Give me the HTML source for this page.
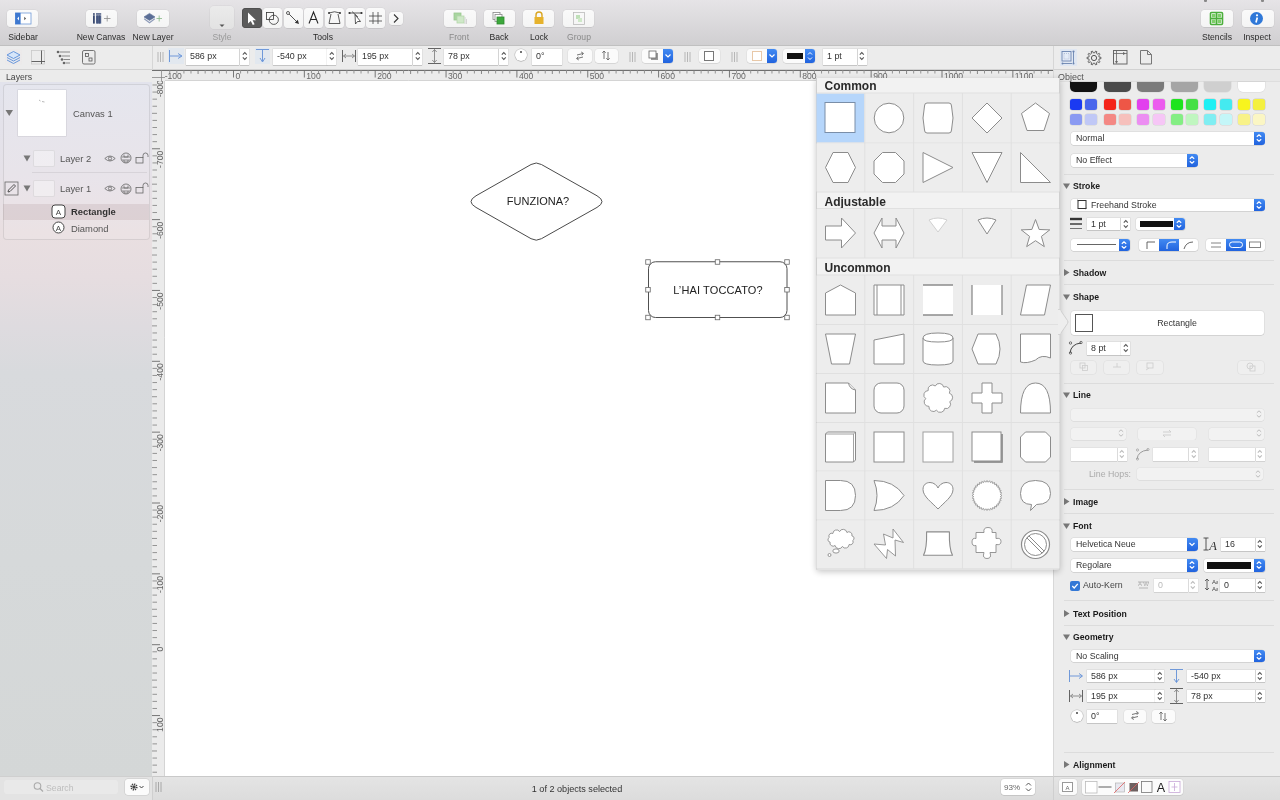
<!DOCTYPE html><html><head><meta charset="utf-8"><style>
html,body{margin:0;padding:0;}
body{width:1280px;height:800px;overflow:hidden;position:relative;font-family:"Liberation Sans", sans-serif;background:#ececec;}
div,svg{box-sizing:border-box;} div,svg{will-change:transform;}
.tb{position:absolute;background:linear-gradient(#fafafa,#f4f4f4);border-radius:3.5px;box-shadow:0 0 0 0.5px rgba(0,0,0,0.06),0 0.5px 0.5px rgba(0,0,0,0.12);}
.fld{position:absolute;background:#fff;box-shadow:0 0 0 0.5px rgba(0,0,0,0.1),0 0.5px 0.5px rgba(0,0,0,0.12);}
.btn{position:absolute;background:#fbfbfb;border-radius:3px;box-shadow:0 0 0 0.5px rgba(0,0,0,0.07),0 0.5px 0.5px rgba(0,0,0,0.12);}
.blue{position:absolute;background:linear-gradient(#428af2,#2163de);border-radius:0 3px 3px 0;}
</style></head><body>
<div style="position:absolute;left:0px;top:0px;width:1280px;height:46px;background:linear-gradient(#e6e4e7,#d0cfd1);border-bottom:1px solid #c0c0c0;"></div>
<div class="tb" style="left:7px;top:10px;width:31px;height:17px;"></div>
<svg style="position:absolute;left:14px;top:12px;" width="18" height="13" viewBox="0 0 18 13"><rect x="1.5" y="1" width="15.5" height="11" fill="#fff" stroke="#6f9ad8" stroke-width="0.8"/><rect x="1.2" y="0.8" width="5.4" height="11.4" fill="#3d78d0"/><path d="M5 4.6 L3.2 6.5 L5 8.4Z" fill="#fff"/><path d="M10.3 4.8 L12 6.5 L10.3 8.2Z" fill="#444"/></svg>
<div style="position:absolute;left:-7.5px;top:31.400000000000002px;width:60px;height:12.6px;line-height:12.6px;text-align:center;font-size:8.6px;color:#2b2b2b;font-weight:normal;white-space:nowrap;">Sidebar</div>
<div class="tb" style="left:86px;top:10px;width:31px;height:17px;"></div>
<svg style="position:absolute;left:80px;top:6px;" width="40" height="24" viewBox="0 0 40 24"><rect x="13" y="7.2" width="1.8" height="1.6" fill="#3a4a70"/><rect x="13" y="9.3" width="1.8" height="8.3" fill="#3a4a70"/><rect x="16" y="7.2" width="5.2" height="1.5" fill="#4a5a82"/><rect x="16" y="9.3" width="5.2" height="8.3" fill="#52638c"/><path d="M17.7 9.3 V17.6 M19.5 9.3 V17.6" stroke="#3a4a70" stroke-width="0.6"/><path d="M24 12.5 H30.5 M27.2 9.5 V15.5" stroke="#8a8a8a" stroke-width="0.8"/></svg>
<div style="position:absolute;left:61.0px;top:31.400000000000002px;width:80px;height:12.6px;line-height:12.6px;text-align:center;font-size:8.6px;color:#2b2b2b;font-weight:normal;white-space:nowrap;">New Canvas</div>
<div class="tb" style="left:137px;top:10px;width:32px;height:17px;"></div>
<svg style="position:absolute;left:141px;top:6px;" width="26" height="24" viewBox="0 0 26 24"><path d="M3.2 12.8 L8.5 16.8 L13.8 12.8" fill="none" stroke="#8e9bb8" stroke-width="1.2"/><path d="M8.5 7.4 L14 10.9 L8.5 14.4 L3 10.9Z" fill="#5b6e96" stroke="#5b6e96" stroke-width="0.6"/><path d="M15.5 12.5 H21 M18.2 9.5 V15.5" stroke="#86b886" stroke-width="0.8"/></svg>
<div style="position:absolute;left:113.0px;top:31.400000000000002px;width:80px;height:12.6px;line-height:12.6px;text-align:center;font-size:8.6px;color:#2b2b2b;font-weight:normal;white-space:nowrap;">New Layer</div>
<div style="position:absolute;left:210px;top:6px;width:24px;height:23px;border-radius:4px;background:linear-gradient(#ebebeb,#e2e2e2);box-shadow:0 0 0 0.5px rgba(0,0,0,0.06);"></div>
<svg style="position:absolute;left:219px;top:24px;" width="6" height="4" viewBox="0 0 6 4"><path d="M0.5 0.5 L5.5 0.5 L3 3Z" fill="#555"/></svg>
<div style="position:absolute;left:192.0px;top:31.400000000000002px;width:60px;height:12.6px;line-height:12.6px;text-align:center;font-size:8.6px;color:#9a9a9a;font-weight:normal;white-space:nowrap;">Style</div>
<div style="position:absolute;left:241.5px;top:8px;width:19.5px;height:20px;border-radius:4px;background:#5b5b5b;box-shadow:inset 0 0 0 0.5px #444;"></div>
<div class="tb" style="left:262.5px;top:8px;width:19.0px;height:20px;"></div>
<div class="tb" style="left:283.5px;top:8px;width:19.0px;height:20px;"></div>
<div class="tb" style="left:304px;top:8px;width:19px;height:20px;"></div>
<div class="tb" style="left:325px;top:8px;width:19px;height:20px;"></div>
<div class="tb" style="left:345.5px;top:8px;width:19.0px;height:20px;"></div>
<div class="tb" style="left:366px;top:8px;width:19px;height:20px;"></div>
<svg style="position:absolute;left:245px;top:11px;" width="13" height="15" viewBox="0 0 13 15"><path d="M3 1.5 L3 12.5 L5.8 10 L7.8 14 L9.6 13.2 L7.6 9.3 L11 9.2Z" fill="#fff"/></svg>
<svg style="position:absolute;left:264px;top:10px;" width="17" height="16" viewBox="0 0 17 16"><rect x="2.5" y="2.5" width="7" height="7" fill="none" stroke="#333" stroke-width="0.8"/><circle cx="9.8" cy="9.8" r="4.6" fill="none" stroke="#333" stroke-width="0.8"/></svg>
<svg style="position:absolute;left:285px;top:10px;" width="17" height="16" viewBox="0 0 17 16"><circle cx="3" cy="3" r="1.5" fill="#fff" stroke="#333" stroke-width="0.8"/><path d="M4.1 4.1 L12 12" stroke="#333" stroke-width="0.85"/><path d="M14 14 L9.8 12.8 L12.8 9.8Z" fill="#333"/></svg>
<svg style="position:absolute;left:304px;top:8px;" width="19" height="20" viewBox="0 0 19 20"><path d="M5 15.5 L9.5 4 L14 15.5 M6.6 11.5 H12.4" fill="none" stroke="#222" stroke-width="1.05"/></svg>
<svg style="position:absolute;left:326px;top:10px;" width="17" height="16" viewBox="0 0 17 16"><path d="M3 3 Q8.5 0.5 14 3" fill="none" stroke="#333" stroke-width="0.8"/><path d="M5 4 L3 13.5 L14 13.5 L12 4" fill="none" stroke="#333" stroke-width="0.8"/><circle cx="3" cy="3" r="1" fill="#333"/><circle cx="14" cy="3" r="1" fill="#333"/></svg>
<svg style="position:absolute;left:347px;top:10px;" width="17" height="16" viewBox="0 0 17 16"><path d="M2 3 L15 3" stroke="#333" stroke-width="0.8"/><path d="M8 4.5 L8.5 14 L10.5 11.5 L13.5 11.5Z" fill="#fff" stroke="#333" stroke-width="0.8"/><circle cx="2.5" cy="3" r="1.1" fill="#333"/><circle cx="14.5" cy="3" r="1.1" fill="#333"/><path d="M5 1.5 L11 7" stroke="#333" stroke-width="0.7"/></svg>
<svg style="position:absolute;left:367px;top:10px;" width="17" height="16" viewBox="0 0 17 16"><path d="M6 2 V14 M11 2 V14 M2 6 H15 M2 11 H15" stroke="#444" stroke-width="0.8"/></svg>
<div class="tb" style="left:388.5px;top:12px;width:13.5px;height:13px;"></div>
<svg style="position:absolute;left:391px;top:13px;" width="9" height="11" viewBox="0 0 9 11"><path d="M3 1.5 L7 5.5 L3 9.5" fill="none" stroke="#333" stroke-width="1.1"/></svg>
<div style="position:absolute;left:293.0px;top:31.400000000000002px;width:60px;height:12.6px;line-height:12.6px;text-align:center;font-size:8.6px;color:#2b2b2b;font-weight:normal;white-space:nowrap;">Tools</div>
<div class="tb" style="left:443.5px;top:10px;width:31.5px;height:17px;"></div>
<div style="position:absolute;left:429.25px;top:31.400000000000002px;width:60px;height:12.6px;line-height:12.6px;text-align:center;font-size:8.6px;color:#8a8a8a;font-weight:normal;white-space:nowrap;">Front</div>
<div class="tb" style="left:483.5px;top:10px;width:31.0px;height:17px;"></div>
<div style="position:absolute;left:469.0px;top:31.400000000000002px;width:60px;height:12.6px;line-height:12.6px;text-align:center;font-size:8.6px;color:#2b2b2b;font-weight:normal;white-space:nowrap;">Back</div>
<div class="tb" style="left:523px;top:10px;width:31px;height:17px;"></div>
<div style="position:absolute;left:508.5px;top:31.400000000000002px;width:60px;height:12.6px;line-height:12.6px;text-align:center;font-size:8.6px;color:#2b2b2b;font-weight:normal;white-space:nowrap;">Lock</div>
<div class="tb" style="left:563px;top:10px;width:31px;height:17px;"></div>
<div style="position:absolute;left:548.5px;top:31.400000000000002px;width:60px;height:12.6px;line-height:12.6px;text-align:center;font-size:8.6px;color:#8a8a8a;font-weight:normal;white-space:nowrap;">Group</div>
<svg style="position:absolute;left:452px;top:11px;" width="16" height="15" viewBox="0 0 16 15"><rect x="2" y="2" width="7" height="7" fill="#a8d6a0" stroke="#9bc890" stroke-width="0.8"/><rect x="5" y="5" width="7" height="7" fill="#cfe8c8" stroke="#b5d6aa" stroke-width="0.8"/><path d="M13 6 V13 M14.5 8 V13" stroke="#ccc" stroke-width="0.8"/></svg>
<svg style="position:absolute;left:491px;top:11px;" width="16" height="15" viewBox="0 0 16 15"><rect x="2" y="1.5" width="7" height="7" fill="#fff" stroke="#888" stroke-width="0.8"/><rect x="4" y="3.5" width="7" height="7" fill="#fff" stroke="#888" stroke-width="0.8"/><rect x="6" y="6" width="7" height="7" fill="#3ca83c" stroke="#2f8a2f" stroke-width="0.8"/></svg>
<svg style="position:absolute;left:532px;top:10px;" width="14" height="16" viewBox="0 0 14 16"><path d="M4 7 V5 A3 3 0 0 1 10 5 V7" fill="none" stroke="#d9a520" stroke-width="1.4"/><rect x="2.5" y="7" width="9" height="7" fill="#e6b22c"/></svg>
<svg style="position:absolute;left:571px;top:11px;" width="16" height="15" viewBox="0 0 16 15"><rect x="2.5" y="1.5" width="11" height="12" fill="none" stroke="#bbb" stroke-width="0.8"/><rect x="5" y="4" width="4" height="4" fill="#bfe0b8"/><rect x="7" y="7" width="4" height="4" fill="#cfe8c8"/></svg>
<div style="position:absolute;left:1204px;top:0px;width:2.5px;height:1.5px;background:#888;border-radius:0 0 1px 1px;"></div>
<div style="position:absolute;left:1261px;top:0px;width:2.5px;height:1.5px;background:#888;border-radius:0 0 1px 1px;"></div>
<div class="tb" style="left:1201px;top:10px;width:32px;height:17px;"></div>
<svg style="position:absolute;left:1209px;top:11px;" width="16" height="15" viewBox="0 0 16 15"><rect x="1.5" y="1.5" width="12" height="12" rx="1" fill="none" stroke="#4caf3c" stroke-width="1.6"/><path d="M7.5 1.5 V13.5 M1.5 7.5 H13.5" stroke="#4caf3c" stroke-width="1.6"/><rect x="3" y="3" width="3.5" height="3.5" fill="#7fd06a"/><rect x="8.5" y="3" width="3.5" height="3.5" fill="#7fd06a"/><rect x="3" y="8.5" width="3.5" height="3.5" fill="#7fd06a"/><rect x="8.5" y="8.5" width="3.5" height="3.5" fill="#7fd06a"/></svg>
<div style="position:absolute;left:1187.0px;top:31.400000000000002px;width:60px;height:12.6px;line-height:12.6px;text-align:center;font-size:8.6px;color:#2b2b2b;font-weight:normal;white-space:nowrap;">Stencils</div>
<div class="tb" style="left:1241.5px;top:10px;width:31.5px;height:17px;"></div>
<svg style="position:absolute;left:1249px;top:11px;" width="16" height="15" viewBox="0 0 16 15"><circle cx="7.5" cy="7.5" r="6.5" fill="#2f78d8"/><circle cx="8" cy="4.3" r="1.1" fill="#fff"/><path d="M8.3 6.5 L7 11.5" stroke="#fff" stroke-width="1.7"/></svg>
<div style="position:absolute;left:1227.0px;top:31.400000000000002px;width:60px;height:12.6px;line-height:12.6px;text-align:center;font-size:8.6px;color:#2b2b2b;font-weight:normal;white-space:nowrap;">Inspect</div>
<div style="position:absolute;left:0px;top:46px;width:1280px;height:24px;background:#ececec;border-bottom:1px solid #d2d2d2;"></div>
<svg style="position:absolute;left:5px;top:49px;background:radial-gradient(ellipse at center, rgba(200,220,250,0.5), rgba(240,225,225,0.2) 70%, transparent);" width="17" height="16" viewBox="0 0 17 16"><path d="M8.5 2.5 L15 6 L8.5 9.5 L2 6Z" fill="#d6e6fa" stroke="#5a8fd8" stroke-width="0.9"/><path d="M2 8.5 L8.5 12 L15 8.5" fill="none" stroke="#5a8fd8" stroke-width="0.9"/><path d="M2 11 L8.5 14.5 L15 11" fill="none" stroke="#5a8fd8" stroke-width="0.9"/></svg>
<svg style="position:absolute;left:31px;top:50px;" width="15" height="15" viewBox="0 0 15 15"><rect x="0.5" y="0.5" width="13" height="13.5" fill="none" stroke="#c8c8c8" stroke-width="0.8"/><path d="M0.5 11.5 H14 M10.5 0.5 V14" stroke="#555" stroke-width="0.9"/></svg>
<svg style="position:absolute;left:56px;top:50px;" width="15" height="15" viewBox="0 0 15 15"><circle cx="2" cy="2" r="1.3" fill="#666"/><circle cx="4" cy="6" r="1.3" fill="#666"/><circle cx="6" cy="9.5" r="1.3" fill="#666"/><circle cx="8" cy="13" r="1.3" fill="#666"/><path d="M3.5 2 H14 M5.5 6 H14 M7.5 9.5 H14 M9.5 13 H14" stroke="#888" stroke-width="1"/></svg>
<svg style="position:absolute;left:81.5px;top:50px;" width="14" height="15" viewBox="0 0 14 15"><rect x="0.5" y="0.5" width="12.5" height="13.5" rx="1.5" fill="none" stroke="#666" stroke-width="0.9"/><rect x="3.5" y="3.5" width="3" height="3" fill="none" stroke="#555" stroke-width="0.8"/><rect x="7" y="8" width="3" height="3" fill="none" stroke="#555" stroke-width="0.8"/></svg>
<div style="position:absolute;left:152px;top:46px;width:1px;height:24px;background:#d6d6d6;"></div>
<svg style="position:absolute;left:156.5px;top:51px;" width="7" height="12" viewBox="0 0 7 12"><path d="M1 1 V11 M3.5 1 V11 M6 1 V11" stroke="#aaa" stroke-width="0.8"/></svg>
<svg style="position:absolute;left:168px;top:48px;background:rgba(210,225,245,0.35);" width="16" height="16" viewBox="0 0 16 16"><path d="M1.5 2 V14" stroke="#5a8ad6" stroke-width="0.85"/><path d="M2 8 H13" stroke="#5a8ad6" stroke-width="0.85"/><path d="M10 5.5 L14 8 L10 10.5" fill="none" stroke="#5a8ad6" stroke-width="0.85"/></svg>
<div class="fld" style="left:186px;top:48.5px;width:53.0px;height:15.5px;"></div><div style="position:absolute;left:190px;top:50.3px;height:12.9px;line-height:12.9px;font-size:8.9px;color:#333;font-weight:normal;white-space:nowrap;">586 px</div><div class="fld" style="left:240.0px;top:48.5px;width:8.5px;height:15.5px;"></div><svg style="position:absolute;left:240.5px;top:51.25px;" width="8" height="10" viewBox="0 0 8 10"><path d="M1.8 3.6 L3.8 1.6 L5.8 3.6 M1.8 6.4 L3.8 8.4 L5.8 6.4" fill="none" stroke="#555" stroke-width="1.05"/></svg>
<svg style="position:absolute;left:255px;top:48px;background:rgba(210,225,245,0.35);" width="15" height="16" viewBox="0 0 15 16"><path d="M1 1.5 H14" stroke="#5a8ad6" stroke-width="0.85"/><path d="M7.5 2 V13" stroke="#5a8ad6" stroke-width="0.85"/><path d="M5 10 L7.5 14 L10 10" fill="none" stroke="#5a8ad6" stroke-width="0.85"/></svg>
<div class="fld" style="left:272.5px;top:48.5px;width:53.5px;height:15.5px;"></div><div style="position:absolute;left:276.5px;top:50.3px;height:12.9px;line-height:12.9px;font-size:8.9px;color:#333;font-weight:normal;white-space:nowrap;">-540 px</div><div class="fld" style="left:327.0px;top:48.5px;width:8.5px;height:15.5px;"></div><svg style="position:absolute;left:327.5px;top:51.25px;" width="8" height="10" viewBox="0 0 8 10"><path d="M1.8 3.6 L3.8 1.6 L5.8 3.6 M1.8 6.4 L3.8 8.4 L5.8 6.4" fill="none" stroke="#555" stroke-width="1.05"/></svg>
<svg style="position:absolute;left:341px;top:48px;" width="16" height="16" viewBox="0 0 16 16"><path d="M1.5 2 V14 M14.5 2 V14" stroke="#555" stroke-width="0.9"/><path d="M2.5 8 H13.5" stroke="#777" stroke-width="0.8"/><path d="M5 6 L2.5 8 L5 10 M11 6 L13.5 8 L11 10" fill="none" stroke="#777" stroke-width="0.8"/></svg>
<div class="fld" style="left:358px;top:48.5px;width:54.0px;height:15.5px;"></div><div style="position:absolute;left:362px;top:50.3px;height:12.9px;line-height:12.9px;font-size:8.9px;color:#333;font-weight:normal;white-space:nowrap;">195 px</div><div class="fld" style="left:413.0px;top:48.5px;width:8.5px;height:15.5px;"></div><svg style="position:absolute;left:413.5px;top:51.25px;" width="8" height="10" viewBox="0 0 8 10"><path d="M1.8 3.6 L3.8 1.6 L5.8 3.6 M1.8 6.4 L3.8 8.4 L5.8 6.4" fill="none" stroke="#555" stroke-width="1.05"/></svg>
<svg style="position:absolute;left:427px;top:47px;" width="15" height="18" viewBox="0 0 15 18"><path d="M1 1.5 H14 M1 16.5 H14" stroke="#555" stroke-width="0.9"/><path d="M7.5 2.5 V15.5" stroke="#777" stroke-width="0.8"/><path d="M5.3 5 L7.5 2.5 L9.7 5 M5.3 13 L7.5 15.5 L9.7 13" fill="none" stroke="#777" stroke-width="0.8"/></svg>
<div class="fld" style="left:444px;top:48.5px;width:54.0px;height:15.5px;"></div><div style="position:absolute;left:448px;top:50.3px;height:12.9px;line-height:12.9px;font-size:8.9px;color:#333;font-weight:normal;white-space:nowrap;">78 px</div><div class="fld" style="left:499.0px;top:48.5px;width:8.5px;height:15.5px;"></div><svg style="position:absolute;left:499.5px;top:51.25px;" width="8" height="10" viewBox="0 0 8 10"><path d="M1.8 3.6 L3.8 1.6 L5.8 3.6 M1.8 6.4 L3.8 8.4 L5.8 6.4" fill="none" stroke="#555" stroke-width="1.05"/></svg>
<div style="position:absolute;left:514.5px;top:49px;width:12px;height:12px;border-radius:50%;background:#fff;box-shadow:0 0 0 0.5px rgba(0,0,0,0.2),0 0.5px 1px rgba(0,0,0,0.2);"></div>
<div style="position:absolute;left:519.5px;top:51px;width:2px;height:2px;background:#444;border-radius:1px;"></div>
<div class="fld" style="left:531.5px;top:48.5px;width:29.5px;height:15.5px;"></div><div style="position:absolute;left:535.5px;top:50.3px;height:12.9px;line-height:12.9px;font-size:8.9px;color:#333;font-weight:normal;white-space:nowrap;">0°</div>
<div class="btn" style="left:567.5px;top:49px;width:24px;height:13.5px;"></div>
<svg style="position:absolute;left:573px;top:49px;" width="14" height="14" viewBox="0 0 14 14"><path d="M4 6 L10 4.5 M8.2 3 L10.5 4.4 L8.8 6.3 M10 8 L4 9.5 M5.8 11 L3.5 9.6 L5.2 7.7" fill="none" stroke="#666" stroke-width="0.9"/></svg>
<div class="btn" style="left:595px;top:49px;width:22.5px;height:13.5px;"></div>
<svg style="position:absolute;left:599px;top:48px;" width="14" height="15" viewBox="0 0 14 15"><path d="M5 11 V3 M3.3 4.8 L5 3 L6.7 4.8 M9 4 V12 M7.3 10.2 L9 12 L10.7 10.2" fill="none" stroke="#666" stroke-width="0.9"/></svg>
<svg style="position:absolute;left:629px;top:51px;" width="7" height="12" viewBox="0 0 7 12"><path d="M1 1 V11 M3.5 1 V11 M6 1 V11" stroke="#aaa" stroke-width="0.8"/></svg>
<div class="btn" style="left:642px;top:49px;width:31px;height:14px;border-radius:3px;"></div>
<svg style="position:absolute;left:647px;top:49px;" width="14" height="14" viewBox="0 0 14 14"><rect x="4" y="4" width="7" height="7" fill="#999"/><rect x="2" y="2" width="7" height="7" fill="#fff" stroke="#666" stroke-width="0.8"/></svg>
<div class="blue" style="left:663px;top:49px;width:10px;height:14px;"></div>
<svg style="position:absolute;left:663px;top:49px;" width="10" height="14" viewBox="0 0 10 14"><path d="M2.5 5.5 L5 8 L7.5 5.5" fill="none" stroke="#fff" stroke-width="1.2"/></svg>
<svg style="position:absolute;left:684px;top:51px;" width="7" height="12" viewBox="0 0 7 12"><path d="M1 1 V11 M3.5 1 V11 M6 1 V11" stroke="#aaa" stroke-width="0.8"/></svg>
<div class="btn" style="left:699px;top:49px;width:20.5px;height:14px;"></div>
<div style="position:absolute;left:704px;top:51px;width:10px;height:10px;border:1px solid #777;background:#fff;"></div>
<svg style="position:absolute;left:731px;top:51px;" width="7" height="12" viewBox="0 0 7 12"><path d="M1 1 V11 M3.5 1 V11 M6 1 V11" stroke="#aaa" stroke-width="0.8"/></svg>
<div class="btn" style="left:746.5px;top:49px;width:29.5px;height:14px;"></div>
<div style="position:absolute;left:752px;top:51px;width:10px;height:10px;border:1px solid #e8c8a8;background:#fff;"></div>
<div class="blue" style="left:766.5px;top:49px;width:9.5px;height:14px;"></div>
<svg style="position:absolute;left:766.5px;top:49px;" width="10" height="14" viewBox="0 0 10 14"><path d="M2.5 5.5 L5 8 L7.5 5.5" fill="none" stroke="#fff" stroke-width="1.2"/></svg>
<div class="btn" style="left:783px;top:49px;width:32px;height:14px;"></div>
<div style="position:absolute;left:787px;top:52.5px;width:16px;height:6px;background:#111;"></div>
<div class="blue" style="left:805px;top:49px;width:10px;height:14px;"></div>
<svg style="position:absolute;left:805px;top:49px;" width="10" height="14" viewBox="0 0 10 14"><path d="M3 5.5 L5 3.5 L7 5.5 M3 8.5 L5 10.5 L7 8.5" fill="none" stroke="#fff" stroke-width="1"/></svg>
<div class="fld" style="left:822.5px;top:48.5px;width:34.0px;height:15.5px;"></div><div style="position:absolute;left:826.5px;top:50.3px;height:12.9px;line-height:12.9px;font-size:8.9px;color:#333;font-weight:normal;white-space:nowrap;">1 pt</div><div class="fld" style="left:857.5px;top:48.5px;width:8.5px;height:15.5px;"></div><svg style="position:absolute;left:858.0px;top:51.25px;" width="8" height="10" viewBox="0 0 8 10"><path d="M1.8 3.6 L3.8 1.6 L5.8 3.6 M1.8 6.4 L3.8 8.4 L5.8 6.4" fill="none" stroke="#555" stroke-width="1.05"/></svg>
<div style="position:absolute;left:1053px;top:46px;width:1px;height:24px;background:#d6d6d6;"></div>
<svg style="position:absolute;left:1060px;top:49px;background:rgba(215,228,248,0.55);" width="17" height="17" viewBox="0 0 17 17"><rect x="2" y="2.5" width="9" height="9.5" fill="#e4ecf8" stroke="#6b84b0" stroke-width="0.9"/><rect x="4" y="4.5" width="5" height="5.5" fill="none" stroke="#9aaac8" stroke-width="0.6" stroke-dasharray="1 1"/><path d="M13.5 2.5 V14.5 M2 14.5 H12" stroke="#6b84b0" stroke-width="0.9"/><circle cx="13.5" cy="2.5" r="1.1" fill="#6b84b0"/><circle cx="13.5" cy="14.5" r="1" fill="#6b84b0"/><circle cx="2.5" cy="14.5" r="1" fill="#6b84b0"/></svg>
<svg style="position:absolute;left:1086px;top:49.5px;" width="16" height="16" viewBox="0 0 16 16"><path d="M13.23 7.15 L14.96 7.30 L14.96 8.70 L13.23 8.85 L12.73 10.39 L14.05 11.53 L13.22 12.66 L11.73 11.76 L10.42 12.71 L10.82 14.41 L9.48 14.84 L8.81 13.24 L7.19 13.24 L6.52 14.84 L5.18 14.41 L5.58 12.71 L4.27 11.76 L2.78 12.66 L1.95 11.53 L3.27 10.39 L2.77 8.85 L1.04 8.70 L1.04 7.30 L2.77 7.15 L3.27 5.61 L1.95 4.47 L2.78 3.34 L4.27 4.24 L5.58 3.29 L5.18 1.59 L6.52 1.16 L7.19 2.76 L8.81 2.76 L9.48 1.16 L10.82 1.59 L10.42 3.29 L11.73 4.24 L13.22 3.34 L14.05 4.47 L12.73 5.61Z" fill="none" stroke="#555" stroke-width="0.9" stroke-linejoin="round"/><circle cx="8" cy="8" r="2.6" fill="none" stroke="#555" stroke-width="1"/></svg>
<svg style="position:absolute;left:1112px;top:50px;" width="16" height="15" viewBox="0 0 16 15"><rect x="1.5" y="0.5" width="13.5" height="13.5" fill="none" stroke="#666" stroke-width="1"/><path d="M4.5 1 V13.5 M1.5 3.5 H15" stroke="#666" stroke-width="0.8"/><path d="M11 2.3 L13 3.5 L11 4.7 M3.3 11 L4.5 13 L5.7 11" fill="#666" stroke="#666" stroke-width="0.6"/></svg>
<svg style="position:absolute;left:1139px;top:50px;" width="14" height="15" viewBox="0 0 14 15"><path d="M1.5 0.5 H8.5 L12.5 4.5 V14 H1.5Z M8.5 0.5 V4.5 H12.5" fill="none" stroke="#777" stroke-width="1"/></svg>
<div style="position:absolute;left:0px;top:70px;width:152px;height:12px;background:#ebebeb;"></div>
<div style="position:absolute;left:6px;top:70.65px;height:12.7px;line-height:12.7px;font-size:8.7px;color:#444;font-weight:normal;white-space:nowrap;">Layers</div>
<div style="position:absolute;left:0px;top:82px;width:152px;height:694px;background:linear-gradient(180deg,#e2e3ec 0px,#e5e1e8 90px,#e9dfe1 150px,#e6dde0 195px,#dedbdf 245px,#d8dadd 290px,#d6d9da 480px,#d4d7d7 694px);"></div>
<div style="position:absolute;left:2.5px;top:83.5px;width:147px;height:156px;border:1px solid rgba(0,0,0,0.09);border-radius:4px;background:rgba(255,255,255,0.12);"></div>
<svg style="position:absolute;left:5px;top:108.5px;" width="9" height="8" viewBox="0 0 9 8"><path d="M0.5 1 L8 1 L4.25 7Z" fill="#777"/></svg>
<div style="position:absolute;left:17.7px;top:89.5px;width:48.3px;height:46.3px;background:#fff;box-shadow:0 0 0 0.5px rgba(0,0,0,0.12);"></div>
<svg style="position:absolute;left:38px;top:99px;" width="8" height="5" viewBox="0 0 8 5"><path d="M1 1 L2.5 2 M4 2.5 L6.5 3" stroke="#999" stroke-width="0.7"/></svg>
<div style="position:absolute;left:72.5px;top:106.8px;height:13.4px;line-height:13.4px;font-size:9.4px;color:#555;font-weight:normal;white-space:nowrap;">Canvas 1</div>
<svg style="position:absolute;left:22.5px;top:154.5px;" width="8" height="7" viewBox="0 0 8 7"><path d="M0.5 0.5 L7.5 0.5 L4 6.5Z" fill="#777"/></svg>
<div style="position:absolute;left:32.5px;top:149.5px;width:22px;height:17px;background:rgba(255,255,255,0.35);border:1px solid rgba(0,0,0,0.08);border-radius:2px;"></div>
<div style="position:absolute;left:60px;top:151.8px;height:13.4px;line-height:13.4px;font-size:9.4px;color:#555;font-weight:normal;white-space:nowrap;">Layer 2</div>
<svg style="position:absolute;left:104px;top:153.5px;" width="12" height="9" viewBox="0 0 12 9"><path d="M0.8 4.5 Q6 -0.5 11.2 4.5 Q6 9.5 0.8 4.5Z" fill="none" stroke="#666" stroke-width="0.8"/><circle cx="6" cy="4.5" r="1.6" fill="none" stroke="#666" stroke-width="0.8"/></svg>
<svg style="position:absolute;left:119.5px;top:152px;" width="12" height="12" viewBox="0 0 12 12"><circle cx="6" cy="6" r="5" fill="none" stroke="#666" stroke-width="0.8"/><path d="M2 5 H10 M2 8 H10 M4 2.5 V5 H8 V2.5 M4 8 V10 H8 V8" fill="none" stroke="#666" stroke-width="0.7"/></svg>
<svg style="position:absolute;left:134.5px;top:151.5px;" width="14" height="12" viewBox="0 0 14 12"><rect x="1" y="5.5" width="7" height="5.5" fill="none" stroke="#666" stroke-width="0.8"/><path d="M8 5.5 V3.5 A2.5 2.5 0 0 1 13 3.5 V5" fill="none" stroke="#666" stroke-width="0.8"/></svg>
<div style="position:absolute;left:32px;top:172px;width:115px;height:1px;background:rgba(0,0,0,0.07);"></div>
<svg style="position:absolute;left:3.5px;top:180.5px;" width="15" height="15" viewBox="0 0 15 15"><rect x="1" y="1" width="13" height="13" fill="none" stroke="#666" stroke-width="0.8"/><path d="M4 11 L4.5 9 L10 3.5 L11.5 5 L6 10.5Z" fill="none" stroke="#444" stroke-width="0.9"/></svg>
<svg style="position:absolute;left:22.5px;top:184.5px;" width="8" height="7" viewBox="0 0 8 7"><path d="M0.5 0.5 L7.5 0.5 L4 6.5Z" fill="#777"/></svg>
<div style="position:absolute;left:32.5px;top:180px;width:22px;height:17px;background:rgba(255,255,255,0.35);border:1px solid rgba(0,0,0,0.08);border-radius:2px;"></div>
<div style="position:absolute;left:60px;top:182.3px;height:13.4px;line-height:13.4px;font-size:9.4px;color:#555;font-weight:normal;white-space:nowrap;">Layer 1</div>
<svg style="position:absolute;left:104px;top:184px;" width="12" height="9" viewBox="0 0 12 9"><path d="M0.8 4.5 Q6 -0.5 11.2 4.5 Q6 9.5 0.8 4.5Z" fill="none" stroke="#666" stroke-width="0.8"/><circle cx="6" cy="4.5" r="1.6" fill="none" stroke="#666" stroke-width="0.8"/></svg>
<svg style="position:absolute;left:119.5px;top:182.5px;" width="12" height="12" viewBox="0 0 12 12"><circle cx="6" cy="6" r="5" fill="none" stroke="#666" stroke-width="0.8"/><path d="M2 5 H10 M2 8 H10 M4 2.5 V5 H8 V2.5 M4 8 V10 H8 V8" fill="none" stroke="#666" stroke-width="0.7"/></svg>
<svg style="position:absolute;left:134.5px;top:182px;" width="14" height="12" viewBox="0 0 14 12"><rect x="1" y="5.5" width="7" height="5.5" fill="none" stroke="#666" stroke-width="0.8"/><path d="M8 5.5 V3.5 A2.5 2.5 0 0 1 13 3.5 V5" fill="none" stroke="#666" stroke-width="0.8"/></svg>
<div style="position:absolute;left:3px;top:203.5px;width:146px;height:16px;background:rgba(150,120,120,0.16);"></div>
<svg style="position:absolute;left:50.5px;top:204px;" width="15" height="15" viewBox="0 0 15 15"><rect x="1" y="1" width="13" height="13" rx="3" fill="#fff" stroke="#444" stroke-width="1"/><text x="7.5" y="11" font-size="8" text-anchor="middle" fill="#444" font-family="Liberation Sans">A</text></svg>
<div style="position:absolute;left:71px;top:205.3px;height:13.4px;line-height:13.4px;font-size:9.4px;color:#333;font-weight:bold;white-space:nowrap;">Rectangle</div>
<svg style="position:absolute;left:52px;top:221px;" width="13" height="13" viewBox="0 0 13 13"><circle cx="6.5" cy="6.5" r="5.5" fill="#fff" stroke="#444" stroke-width="1"/><text x="6.5" y="10" font-size="8" text-anchor="middle" fill="#444" font-family="Liberation Sans">A</text></svg>
<div style="position:absolute;left:71px;top:221.8px;height:13.4px;line-height:13.4px;font-size:9.4px;color:#555;font-weight:normal;white-space:nowrap;">Diamond</div>
<div style="position:absolute;left:0px;top:776px;width:152px;height:24px;background:#e3e3e3;border-top:1px solid #cfcfcf;"></div>
<div style="position:absolute;left:4px;top:780px;width:114px;height:14px;background:#e9e9e9;border-radius:3px;"></div>
<svg style="position:absolute;left:33px;top:781px;" width="11" height="12" viewBox="0 0 11 12"><circle cx="4.5" cy="5" r="3.3" fill="none" stroke="#aaa" stroke-width="1.1"/><path d="M7 7.5 L10 10.5" stroke="#aaa" stroke-width="1.3"/></svg>
<div style="position:absolute;left:46px;top:781.65px;height:12.7px;line-height:12.7px;font-size:8.7px;color:#bdbdbd;font-weight:normal;white-space:nowrap;">Search</div>
<div style="position:absolute;left:125px;top:779px;width:24px;height:16px;background:#fbfbfb;border-radius:3px;box-shadow:0 0 0 0.5px rgba(0,0,0,0.12);"></div>
<svg style="position:absolute;left:129px;top:781px;" width="18" height="12" viewBox="0 0 18 12"><circle cx="5" cy="6" r="2.6" fill="none" stroke="#444" stroke-width="2" stroke-dasharray="1.2 0.8"/><circle cx="5" cy="6" r="1.5" fill="#444"/><path d="M10.5 5 L12.5 7 L14.5 5" fill="none" stroke="#444" stroke-width="1"/></svg>
<div style="position:absolute;left:152px;top:776px;width:1px;height:24px;background:#cfcfcf;"></div>
<svg style="position:absolute;left:155px;top:781px;" width="7" height="12" viewBox="0 0 7 12"><path d="M1 1 V11 M3.5 1 V11 M6 1 V11" stroke="#999" stroke-width="0.8"/></svg>
<div style="position:absolute;left:165px;top:81px;width:888px;height:695px;background:#fff;"></div>
<svg style="position:absolute;left:152px;top:70px;" width="901" height="11" viewBox="0 0 901 11"><rect x="0" y="0" width="901" height="11" fill="#ebebeb"/><path d="M0 0.5 H901" stroke="#6f6f6f" stroke-width="1"/><path d="M0 10.5 H901" stroke="#d4d4d4" stroke-width="1"/><path d="M17.74 0 V3.5" stroke="#8a8a8a" stroke-width="0.9"/><path d="M24.82 0 V3.5" stroke="#8a8a8a" stroke-width="0.9"/><path d="M31.91 0 V3.5" stroke="#8a8a8a" stroke-width="0.9"/><path d="M38.99 0 V3.5" stroke="#8a8a8a" stroke-width="0.9"/><path d="M46.07 0 V4" stroke="#7a7a7a" stroke-width="0.9"/><path d="M53.16 0 V3.5" stroke="#8a8a8a" stroke-width="0.9"/><path d="M60.25 0 V3.5" stroke="#8a8a8a" stroke-width="0.9"/><path d="M67.33 0 V3.5" stroke="#8a8a8a" stroke-width="0.9"/><path d="M74.41 0 V3.5" stroke="#8a8a8a" stroke-width="0.9"/><path d="M81.50 0 V7.5" stroke="#6a6a6a" stroke-width="0.9"/><path d="M88.59 0 V3.5" stroke="#8a8a8a" stroke-width="0.9"/><path d="M95.67 0 V3.5" stroke="#8a8a8a" stroke-width="0.9"/><path d="M102.75 0 V3.5" stroke="#8a8a8a" stroke-width="0.9"/><path d="M109.84 0 V3.5" stroke="#8a8a8a" stroke-width="0.9"/><path d="M116.93 0 V4" stroke="#7a7a7a" stroke-width="0.9"/><path d="M124.01 0 V3.5" stroke="#8a8a8a" stroke-width="0.9"/><path d="M131.09 0 V3.5" stroke="#8a8a8a" stroke-width="0.9"/><path d="M138.18 0 V3.5" stroke="#8a8a8a" stroke-width="0.9"/><path d="M145.26 0 V3.5" stroke="#8a8a8a" stroke-width="0.9"/><path d="M152.35 0 V7.5" stroke="#6a6a6a" stroke-width="0.9"/><path d="M159.44 0 V3.5" stroke="#8a8a8a" stroke-width="0.9"/><path d="M166.52 0 V3.5" stroke="#8a8a8a" stroke-width="0.9"/><path d="M173.61 0 V3.5" stroke="#8a8a8a" stroke-width="0.9"/><path d="M180.69 0 V3.5" stroke="#8a8a8a" stroke-width="0.9"/><path d="M187.77 0 V4" stroke="#7a7a7a" stroke-width="0.9"/><path d="M194.86 0 V3.5" stroke="#8a8a8a" stroke-width="0.9"/><path d="M201.94 0 V3.5" stroke="#8a8a8a" stroke-width="0.9"/><path d="M209.03 0 V3.5" stroke="#8a8a8a" stroke-width="0.9"/><path d="M216.12 0 V3.5" stroke="#8a8a8a" stroke-width="0.9"/><path d="M223.20 0 V7.5" stroke="#6a6a6a" stroke-width="0.9"/><path d="M230.28 0 V3.5" stroke="#8a8a8a" stroke-width="0.9"/><path d="M237.37 0 V3.5" stroke="#8a8a8a" stroke-width="0.9"/><path d="M244.45 0 V3.5" stroke="#8a8a8a" stroke-width="0.9"/><path d="M251.54 0 V3.5" stroke="#8a8a8a" stroke-width="0.9"/><path d="M258.62 0 V4" stroke="#7a7a7a" stroke-width="0.9"/><path d="M265.71 0 V3.5" stroke="#8a8a8a" stroke-width="0.9"/><path d="M272.79 0 V3.5" stroke="#8a8a8a" stroke-width="0.9"/><path d="M279.88 0 V3.5" stroke="#8a8a8a" stroke-width="0.9"/><path d="M286.96 0 V3.5" stroke="#8a8a8a" stroke-width="0.9"/><path d="M294.05 0 V7.5" stroke="#6a6a6a" stroke-width="0.9"/><path d="M301.13 0 V3.5" stroke="#8a8a8a" stroke-width="0.9"/><path d="M308.22 0 V3.5" stroke="#8a8a8a" stroke-width="0.9"/><path d="M315.30 0 V3.5" stroke="#8a8a8a" stroke-width="0.9"/><path d="M322.39 0 V3.5" stroke="#8a8a8a" stroke-width="0.9"/><path d="M329.48 0 V4" stroke="#7a7a7a" stroke-width="0.9"/><path d="M336.56 0 V3.5" stroke="#8a8a8a" stroke-width="0.9"/><path d="M343.64 0 V3.5" stroke="#8a8a8a" stroke-width="0.9"/><path d="M350.73 0 V3.5" stroke="#8a8a8a" stroke-width="0.9"/><path d="M357.81 0 V3.5" stroke="#8a8a8a" stroke-width="0.9"/><path d="M364.90 0 V7.5" stroke="#6a6a6a" stroke-width="0.9"/><path d="M371.99 0 V3.5" stroke="#8a8a8a" stroke-width="0.9"/><path d="M379.07 0 V3.5" stroke="#8a8a8a" stroke-width="0.9"/><path d="M386.15 0 V3.5" stroke="#8a8a8a" stroke-width="0.9"/><path d="M393.24 0 V3.5" stroke="#8a8a8a" stroke-width="0.9"/><path d="M400.32 0 V4" stroke="#7a7a7a" stroke-width="0.9"/><path d="M407.41 0 V3.5" stroke="#8a8a8a" stroke-width="0.9"/><path d="M414.50 0 V3.5" stroke="#8a8a8a" stroke-width="0.9"/><path d="M421.58 0 V3.5" stroke="#8a8a8a" stroke-width="0.9"/><path d="M428.66 0 V3.5" stroke="#8a8a8a" stroke-width="0.9"/><path d="M435.75 0 V7.5" stroke="#6a6a6a" stroke-width="0.9"/><path d="M442.84 0 V3.5" stroke="#8a8a8a" stroke-width="0.9"/><path d="M449.92 0 V3.5" stroke="#8a8a8a" stroke-width="0.9"/><path d="M457.00 0 V3.5" stroke="#8a8a8a" stroke-width="0.9"/><path d="M464.09 0 V3.5" stroke="#8a8a8a" stroke-width="0.9"/><path d="M471.17 0 V4" stroke="#7a7a7a" stroke-width="0.9"/><path d="M478.26 0 V3.5" stroke="#8a8a8a" stroke-width="0.9"/><path d="M485.35 0 V3.5" stroke="#8a8a8a" stroke-width="0.9"/><path d="M492.43 0 V3.5" stroke="#8a8a8a" stroke-width="0.9"/><path d="M499.51 0 V3.5" stroke="#8a8a8a" stroke-width="0.9"/><path d="M506.60 0 V7.5" stroke="#6a6a6a" stroke-width="0.9"/><path d="M513.68 0 V3.5" stroke="#8a8a8a" stroke-width="0.9"/><path d="M520.77 0 V3.5" stroke="#8a8a8a" stroke-width="0.9"/><path d="M527.85 0 V3.5" stroke="#8a8a8a" stroke-width="0.9"/><path d="M534.94 0 V3.5" stroke="#8a8a8a" stroke-width="0.9"/><path d="M542.02 0 V4" stroke="#7a7a7a" stroke-width="0.9"/><path d="M549.11 0 V3.5" stroke="#8a8a8a" stroke-width="0.9"/><path d="M556.19 0 V3.5" stroke="#8a8a8a" stroke-width="0.9"/><path d="M563.28 0 V3.5" stroke="#8a8a8a" stroke-width="0.9"/><path d="M570.37 0 V3.5" stroke="#8a8a8a" stroke-width="0.9"/><path d="M577.45 0 V7.5" stroke="#6a6a6a" stroke-width="0.9"/><path d="M584.53 0 V3.5" stroke="#8a8a8a" stroke-width="0.9"/><path d="M591.62 0 V3.5" stroke="#8a8a8a" stroke-width="0.9"/><path d="M598.70 0 V3.5" stroke="#8a8a8a" stroke-width="0.9"/><path d="M605.79 0 V3.5" stroke="#8a8a8a" stroke-width="0.9"/><path d="M612.88 0 V4" stroke="#7a7a7a" stroke-width="0.9"/><path d="M619.96 0 V3.5" stroke="#8a8a8a" stroke-width="0.9"/><path d="M627.04 0 V3.5" stroke="#8a8a8a" stroke-width="0.9"/><path d="M634.13 0 V3.5" stroke="#8a8a8a" stroke-width="0.9"/><path d="M641.21 0 V3.5" stroke="#8a8a8a" stroke-width="0.9"/><path d="M648.30 0 V7.5" stroke="#6a6a6a" stroke-width="0.9"/><path d="M655.38 0 V3.5" stroke="#8a8a8a" stroke-width="0.9"/><path d="M662.47 0 V3.5" stroke="#8a8a8a" stroke-width="0.9"/><path d="M669.55 0 V3.5" stroke="#8a8a8a" stroke-width="0.9"/><path d="M676.64 0 V3.5" stroke="#8a8a8a" stroke-width="0.9"/><path d="M683.72 0 V4" stroke="#7a7a7a" stroke-width="0.9"/><path d="M690.81 0 V3.5" stroke="#8a8a8a" stroke-width="0.9"/><path d="M697.89 0 V3.5" stroke="#8a8a8a" stroke-width="0.9"/><path d="M704.98 0 V3.5" stroke="#8a8a8a" stroke-width="0.9"/><path d="M712.06 0 V3.5" stroke="#8a8a8a" stroke-width="0.9"/><path d="M719.15 0 V7.5" stroke="#6a6a6a" stroke-width="0.9"/><path d="M726.23 0 V3.5" stroke="#8a8a8a" stroke-width="0.9"/><path d="M733.32 0 V3.5" stroke="#8a8a8a" stroke-width="0.9"/><path d="M740.40 0 V3.5" stroke="#8a8a8a" stroke-width="0.9"/><path d="M747.49 0 V3.5" stroke="#8a8a8a" stroke-width="0.9"/><path d="M754.57 0 V4" stroke="#7a7a7a" stroke-width="0.9"/><path d="M761.66 0 V3.5" stroke="#8a8a8a" stroke-width="0.9"/><path d="M768.75 0 V3.5" stroke="#8a8a8a" stroke-width="0.9"/><path d="M775.83 0 V3.5" stroke="#8a8a8a" stroke-width="0.9"/><path d="M782.91 0 V3.5" stroke="#8a8a8a" stroke-width="0.9"/><path d="M790.00 0 V7.5" stroke="#6a6a6a" stroke-width="0.9"/><path d="M797.08 0 V3.5" stroke="#8a8a8a" stroke-width="0.9"/><path d="M804.17 0 V3.5" stroke="#8a8a8a" stroke-width="0.9"/><path d="M811.25 0 V3.5" stroke="#8a8a8a" stroke-width="0.9"/><path d="M818.34 0 V3.5" stroke="#8a8a8a" stroke-width="0.9"/><path d="M825.42 0 V4" stroke="#7a7a7a" stroke-width="0.9"/><path d="M832.51 0 V3.5" stroke="#8a8a8a" stroke-width="0.9"/><path d="M839.60 0 V3.5" stroke="#8a8a8a" stroke-width="0.9"/><path d="M846.68 0 V3.5" stroke="#8a8a8a" stroke-width="0.9"/><path d="M853.76 0 V3.5" stroke="#8a8a8a" stroke-width="0.9"/><path d="M860.85 0 V7.5" stroke="#6a6a6a" stroke-width="0.9"/><path d="M867.93 0 V3.5" stroke="#8a8a8a" stroke-width="0.9"/><path d="M875.02 0 V3.5" stroke="#8a8a8a" stroke-width="0.9"/><path d="M882.11 0 V3.5" stroke="#8a8a8a" stroke-width="0.9"/><path d="M889.19 0 V3.5" stroke="#8a8a8a" stroke-width="0.9"/><path d="M896.27 0 V4" stroke="#7a7a7a" stroke-width="0.9"/><text x="12.65" y="9.3" font-size="8.6" fill="#666" font-family="Liberation Sans">-100</text><text x="83.50" y="9.3" font-size="8.6" fill="#666" font-family="Liberation Sans">0</text><text x="154.35" y="9.3" font-size="8.6" fill="#666" font-family="Liberation Sans">100</text><text x="225.20" y="9.3" font-size="8.6" fill="#666" font-family="Liberation Sans">200</text><text x="296.05" y="9.3" font-size="8.6" fill="#666" font-family="Liberation Sans">300</text><text x="366.90" y="9.3" font-size="8.6" fill="#666" font-family="Liberation Sans">400</text><text x="437.75" y="9.3" font-size="8.6" fill="#666" font-family="Liberation Sans">500</text><text x="508.60" y="9.3" font-size="8.6" fill="#666" font-family="Liberation Sans">600</text><text x="579.45" y="9.3" font-size="8.6" fill="#666" font-family="Liberation Sans">700</text><text x="650.30" y="9.3" font-size="8.6" fill="#666" font-family="Liberation Sans">800</text><text x="721.15" y="9.3" font-size="8.6" fill="#666" font-family="Liberation Sans">900</text><text x="792.00" y="9.3" font-size="8.6" fill="#666" font-family="Liberation Sans">1000</text><text x="862.85" y="9.3" font-size="8.6" fill="#666" font-family="Liberation Sans">1100</text></svg>
<svg style="position:absolute;left:152px;top:81px;" width="13" height="695" viewBox="0 0 13 695"><rect x="0" y="0" width="13" height="695" fill="#ebebeb"/><path d="M12.5 0 V695" stroke="#d4d4d4" stroke-width="1"/><path d="M0.5 3.99 H5" stroke="#8a8a8a" stroke-width="0.9"/><path d="M0.5 11.07 H5" stroke="#8a8a8a" stroke-width="0.9"/><path d="M0.5 18.16 H5" stroke="#8a8a8a" stroke-width="0.9"/><path d="M0.5 25.24 H5" stroke="#8a8a8a" stroke-width="0.9"/><path d="M0 32.33 H5" stroke="#8a8a8a" stroke-width="0.9"/><path d="M0.5 39.41 H5" stroke="#8a8a8a" stroke-width="0.9"/><path d="M0.5 46.50 H5" stroke="#8a8a8a" stroke-width="0.9"/><path d="M0.5 53.58 H5" stroke="#8a8a8a" stroke-width="0.9"/><path d="M0.5 60.67 H5" stroke="#8a8a8a" stroke-width="0.9"/><path d="M0 67.75 H8" stroke="#6a6a6a" stroke-width="0.9"/><path d="M0.5 74.84 H5" stroke="#8a8a8a" stroke-width="0.9"/><path d="M0.5 81.92 H5" stroke="#8a8a8a" stroke-width="0.9"/><path d="M0.5 89.01 H5" stroke="#8a8a8a" stroke-width="0.9"/><path d="M0.5 96.09 H5" stroke="#8a8a8a" stroke-width="0.9"/><path d="M0 103.18 H5" stroke="#8a8a8a" stroke-width="0.9"/><path d="M0.5 110.26 H5" stroke="#8a8a8a" stroke-width="0.9"/><path d="M0.5 117.35 H5" stroke="#8a8a8a" stroke-width="0.9"/><path d="M0.5 124.43 H5" stroke="#8a8a8a" stroke-width="0.9"/><path d="M0.5 131.52 H5" stroke="#8a8a8a" stroke-width="0.9"/><path d="M0 138.60 H8" stroke="#6a6a6a" stroke-width="0.9"/><path d="M0.5 145.69 H5" stroke="#8a8a8a" stroke-width="0.9"/><path d="M0.5 152.77 H5" stroke="#8a8a8a" stroke-width="0.9"/><path d="M0.5 159.86 H5" stroke="#8a8a8a" stroke-width="0.9"/><path d="M0.5 166.94 H5" stroke="#8a8a8a" stroke-width="0.9"/><path d="M0 174.03 H5" stroke="#8a8a8a" stroke-width="0.9"/><path d="M0.5 181.11 H5" stroke="#8a8a8a" stroke-width="0.9"/><path d="M0.5 188.20 H5" stroke="#8a8a8a" stroke-width="0.9"/><path d="M0.5 195.28 H5" stroke="#8a8a8a" stroke-width="0.9"/><path d="M0.5 202.37 H5" stroke="#8a8a8a" stroke-width="0.9"/><path d="M0 209.45 H8" stroke="#6a6a6a" stroke-width="0.9"/><path d="M0.5 216.54 H5" stroke="#8a8a8a" stroke-width="0.9"/><path d="M0.5 223.62 H5" stroke="#8a8a8a" stroke-width="0.9"/><path d="M0.5 230.71 H5" stroke="#8a8a8a" stroke-width="0.9"/><path d="M0.5 237.79 H5" stroke="#8a8a8a" stroke-width="0.9"/><path d="M0 244.88 H5" stroke="#8a8a8a" stroke-width="0.9"/><path d="M0.5 251.96 H5" stroke="#8a8a8a" stroke-width="0.9"/><path d="M0.5 259.05 H5" stroke="#8a8a8a" stroke-width="0.9"/><path d="M0.5 266.13 H5" stroke="#8a8a8a" stroke-width="0.9"/><path d="M0.5 273.22 H5" stroke="#8a8a8a" stroke-width="0.9"/><path d="M0 280.30 H8" stroke="#6a6a6a" stroke-width="0.9"/><path d="M0.5 287.39 H5" stroke="#8a8a8a" stroke-width="0.9"/><path d="M0.5 294.47 H5" stroke="#8a8a8a" stroke-width="0.9"/><path d="M0.5 301.56 H5" stroke="#8a8a8a" stroke-width="0.9"/><path d="M0.5 308.64 H5" stroke="#8a8a8a" stroke-width="0.9"/><path d="M0 315.73 H5" stroke="#8a8a8a" stroke-width="0.9"/><path d="M0.5 322.81 H5" stroke="#8a8a8a" stroke-width="0.9"/><path d="M0.5 329.90 H5" stroke="#8a8a8a" stroke-width="0.9"/><path d="M0.5 336.98 H5" stroke="#8a8a8a" stroke-width="0.9"/><path d="M0.5 344.07 H5" stroke="#8a8a8a" stroke-width="0.9"/><path d="M0 351.15 H8" stroke="#6a6a6a" stroke-width="0.9"/><path d="M0.5 358.24 H5" stroke="#8a8a8a" stroke-width="0.9"/><path d="M0.5 365.32 H5" stroke="#8a8a8a" stroke-width="0.9"/><path d="M0.5 372.41 H5" stroke="#8a8a8a" stroke-width="0.9"/><path d="M0.5 379.49 H5" stroke="#8a8a8a" stroke-width="0.9"/><path d="M0 386.58 H5" stroke="#8a8a8a" stroke-width="0.9"/><path d="M0.5 393.66 H5" stroke="#8a8a8a" stroke-width="0.9"/><path d="M0.5 400.75 H5" stroke="#8a8a8a" stroke-width="0.9"/><path d="M0.5 407.83 H5" stroke="#8a8a8a" stroke-width="0.9"/><path d="M0.5 414.92 H5" stroke="#8a8a8a" stroke-width="0.9"/><path d="M0 422.00 H8" stroke="#6a6a6a" stroke-width="0.9"/><path d="M0.5 429.09 H5" stroke="#8a8a8a" stroke-width="0.9"/><path d="M0.5 436.17 H5" stroke="#8a8a8a" stroke-width="0.9"/><path d="M0.5 443.26 H5" stroke="#8a8a8a" stroke-width="0.9"/><path d="M0.5 450.34 H5" stroke="#8a8a8a" stroke-width="0.9"/><path d="M0 457.43 H5" stroke="#8a8a8a" stroke-width="0.9"/><path d="M0.5 464.51 H5" stroke="#8a8a8a" stroke-width="0.9"/><path d="M0.5 471.60 H5" stroke="#8a8a8a" stroke-width="0.9"/><path d="M0.5 478.68 H5" stroke="#8a8a8a" stroke-width="0.9"/><path d="M0.5 485.77 H5" stroke="#8a8a8a" stroke-width="0.9"/><path d="M0 492.85 H8" stroke="#6a6a6a" stroke-width="0.9"/><path d="M0.5 499.94 H5" stroke="#8a8a8a" stroke-width="0.9"/><path d="M0.5 507.02 H5" stroke="#8a8a8a" stroke-width="0.9"/><path d="M0.5 514.11 H5" stroke="#8a8a8a" stroke-width="0.9"/><path d="M0.5 521.19 H5" stroke="#8a8a8a" stroke-width="0.9"/><path d="M0 528.28 H5" stroke="#8a8a8a" stroke-width="0.9"/><path d="M0.5 535.36 H5" stroke="#8a8a8a" stroke-width="0.9"/><path d="M0.5 542.45 H5" stroke="#8a8a8a" stroke-width="0.9"/><path d="M0.5 549.53 H5" stroke="#8a8a8a" stroke-width="0.9"/><path d="M0.5 556.62 H5" stroke="#8a8a8a" stroke-width="0.9"/><path d="M0 563.70 H8" stroke="#6a6a6a" stroke-width="0.9"/><path d="M0.5 570.79 H5" stroke="#8a8a8a" stroke-width="0.9"/><path d="M0.5 577.87 H5" stroke="#8a8a8a" stroke-width="0.9"/><path d="M0.5 584.96 H5" stroke="#8a8a8a" stroke-width="0.9"/><path d="M0.5 592.04 H5" stroke="#8a8a8a" stroke-width="0.9"/><path d="M0 599.12 H5" stroke="#8a8a8a" stroke-width="0.9"/><path d="M0.5 606.21 H5" stroke="#8a8a8a" stroke-width="0.9"/><path d="M0.5 613.30 H5" stroke="#8a8a8a" stroke-width="0.9"/><path d="M0.5 620.38 H5" stroke="#8a8a8a" stroke-width="0.9"/><path d="M0.5 627.47 H5" stroke="#8a8a8a" stroke-width="0.9"/><path d="M0 634.55 H8" stroke="#6a6a6a" stroke-width="0.9"/><path d="M0.5 641.63 H5" stroke="#8a8a8a" stroke-width="0.9"/><path d="M0.5 648.72 H5" stroke="#8a8a8a" stroke-width="0.9"/><path d="M0.5 655.81 H5" stroke="#8a8a8a" stroke-width="0.9"/><path d="M0.5 662.89 H5" stroke="#8a8a8a" stroke-width="0.9"/><path d="M0 669.98 H5" stroke="#8a8a8a" stroke-width="0.9"/><path d="M0.5 677.06 H5" stroke="#8a8a8a" stroke-width="0.9"/><path d="M0.5 684.14 H5" stroke="#8a8a8a" stroke-width="0.9"/><path d="M0.5 691.23 H5" stroke="#8a8a8a" stroke-width="0.9"/><text x="0" y="0" transform="translate(11.2 -1.10) rotate(-90)" text-anchor="end" font-size="8.6" fill="#666" font-family="Liberation Sans">-800</text><text x="0" y="0" transform="translate(11.2 69.75) rotate(-90)" text-anchor="end" font-size="8.6" fill="#666" font-family="Liberation Sans">-700</text><text x="0" y="0" transform="translate(11.2 140.60) rotate(-90)" text-anchor="end" font-size="8.6" fill="#666" font-family="Liberation Sans">-600</text><text x="0" y="0" transform="translate(11.2 211.45) rotate(-90)" text-anchor="end" font-size="8.6" fill="#666" font-family="Liberation Sans">-500</text><text x="0" y="0" transform="translate(11.2 282.30) rotate(-90)" text-anchor="end" font-size="8.6" fill="#666" font-family="Liberation Sans">-400</text><text x="0" y="0" transform="translate(11.2 353.15) rotate(-90)" text-anchor="end" font-size="8.6" fill="#666" font-family="Liberation Sans">-300</text><text x="0" y="0" transform="translate(11.2 424.00) rotate(-90)" text-anchor="end" font-size="8.6" fill="#666" font-family="Liberation Sans">-200</text><text x="0" y="0" transform="translate(11.2 494.85) rotate(-90)" text-anchor="end" font-size="8.6" fill="#666" font-family="Liberation Sans">-100</text><text x="0" y="0" transform="translate(11.2 565.70) rotate(-90)" text-anchor="end" font-size="8.6" fill="#666" font-family="Liberation Sans">0</text><text x="0" y="0" transform="translate(11.2 636.55) rotate(-90)" text-anchor="end" font-size="8.6" fill="#666" font-family="Liberation Sans">100</text></svg>
<svg style="position:absolute;left:152px;top:70px;" width="13" height="11" viewBox="0 0 13 11"><rect width="13" height="11" fill="#ebebeb"/><path d="M0 0.5 H13" stroke="#6f6f6f"/><path d="M9.5 0 V11 M0 7.5 H13" stroke="#888" stroke-width="0.8"/></svg>
<svg style="position:absolute;left:460px;top:155px;" width="150" height="92" viewBox="0 0 150 92"><path d="M71.05 9.5 Q76.25 6.5 81.45 9.5 L137 40.79 Q147 46.6 137 52.41 L81.45 83.7 Q76.25 86.7 71.05 83.7 L16 52.41 Q6 46.6 16 40.79 Z" fill="#fff" stroke="#4a4a4a" stroke-width="1"/></svg>
<div style="position:absolute;left:477.5px;top:194.0px;width:120px;height:15px;line-height:15px;text-align:center;font-size:11px;color:#222;font-weight:normal;white-space:nowrap;">FUNZIONA?</div>
<svg style="position:absolute;left:645px;top:259px;" width="145" height="62" viewBox="0 0 145 62"><rect x="3.5" y="2.75" width="138.5" height="55.75" rx="7" fill="#fff" stroke="#505050" stroke-width="1"/><rect x="0.75" y="0.75" width="4.5" height="4.5" fill="#fff" stroke="#666" stroke-width="0.8"/><rect x="0.75" y="28.5" width="4.5" height="4.5" fill="#fff" stroke="#666" stroke-width="0.8"/><rect x="0.75" y="56.25" width="4.5" height="4.5" fill="#fff" stroke="#666" stroke-width="0.8"/><rect x="70.25" y="0.75" width="4.5" height="4.5" fill="#fff" stroke="#666" stroke-width="0.8"/><rect x="70.25" y="56.25" width="4.5" height="4.5" fill="#fff" stroke="#666" stroke-width="0.8"/><rect x="139.75" y="0.75" width="4.5" height="4.5" fill="#fff" stroke="#666" stroke-width="0.8"/><rect x="139.75" y="28.5" width="4.5" height="4.5" fill="#fff" stroke="#666" stroke-width="0.8"/><rect x="139.75" y="56.25" width="4.5" height="4.5" fill="#fff" stroke="#666" stroke-width="0.8"/></svg>
<div style="position:absolute;left:637.5px;top:283.0px;width:160px;height:15px;line-height:15px;text-align:center;font-size:11px;color:#222;font-weight:normal;white-space:nowrap;letter-spacing:0.12px;">L’HAI TOCCATO?</div>
<div style="position:absolute;left:1053px;top:70px;width:227px;height:706px;background:#ececec;border-left:1px solid #d8d8d8;"></div>
<div style="position:absolute;left:1054px;top:70px;width:226px;height:12px;background:#e8e8e8;border-bottom:1px solid #dedede;"></div>
<div style="position:absolute;left:1058px;top:70.525px;height:12.95px;line-height:12.95px;font-size:8.95px;color:#555;font-weight:normal;white-space:nowrap;">Object</div>
<div style="position:absolute;left:1070.0px;top:82px;width:27px;height:10px;background:#111111;border-radius:0 0 5px 5px;box-shadow:0 0 0 0.5px rgba(0,0,0,0.08);"></div>
<div style="position:absolute;left:1103.6px;top:82px;width:27px;height:10px;background:#4a4a4a;border-radius:0 0 5px 5px;box-shadow:0 0 0 0.5px rgba(0,0,0,0.08);"></div>
<div style="position:absolute;left:1137.2px;top:82px;width:27px;height:10px;background:#7b7b7b;border-radius:0 0 5px 5px;box-shadow:0 0 0 0.5px rgba(0,0,0,0.08);"></div>
<div style="position:absolute;left:1170.8px;top:82px;width:27px;height:10px;background:#a5a5a5;border-radius:0 0 5px 5px;box-shadow:0 0 0 0.5px rgba(0,0,0,0.08);"></div>
<div style="position:absolute;left:1204.4px;top:82px;width:27px;height:10px;background:#cfcfcf;border-radius:0 0 5px 5px;box-shadow:0 0 0 0.5px rgba(0,0,0,0.08);"></div>
<div style="position:absolute;left:1238.0px;top:82px;width:27px;height:10px;background:#ffffff;border-radius:0 0 5px 5px;box-shadow:0 0 0 0.5px rgba(0,0,0,0.08);"></div>
<div style="position:absolute;left:1070.0px;top:98.5px;width:11.7px;height:11.2px;background:#1a3af2;border-radius:2.5px;box-shadow:0 0 0 0.5px rgba(0,0,0,0.14);"></div>
<div style="position:absolute;left:1070.0px;top:113.7px;width:11.7px;height:11.2px;background:#8a9af2;border-radius:2.5px;box-shadow:0 0 0 0.5px rgba(0,0,0,0.1);"></div>
<div style="position:absolute;left:1085.3px;top:98.5px;width:11.7px;height:11.2px;background:#4a66ec;border-radius:2.5px;box-shadow:0 0 0 0.5px rgba(0,0,0,0.14);"></div>
<div style="position:absolute;left:1085.3px;top:113.7px;width:11.7px;height:11.2px;background:#c0c8f6;border-radius:2.5px;box-shadow:0 0 0 0.5px rgba(0,0,0,0.1);"></div>
<div style="position:absolute;left:1103.6px;top:98.5px;width:11.7px;height:11.2px;background:#f4241a;border-radius:2.5px;box-shadow:0 0 0 0.5px rgba(0,0,0,0.14);"></div>
<div style="position:absolute;left:1103.6px;top:113.7px;width:11.7px;height:11.2px;background:#f48884;border-radius:2.5px;box-shadow:0 0 0 0.5px rgba(0,0,0,0.1);"></div>
<div style="position:absolute;left:1118.8999999999999px;top:98.5px;width:11.7px;height:11.2px;background:#ee5646;border-radius:2.5px;box-shadow:0 0 0 0.5px rgba(0,0,0,0.14);"></div>
<div style="position:absolute;left:1118.8999999999999px;top:113.7px;width:11.7px;height:11.2px;background:#f6c0bc;border-radius:2.5px;box-shadow:0 0 0 0.5px rgba(0,0,0,0.1);"></div>
<div style="position:absolute;left:1137.2px;top:98.5px;width:11.7px;height:11.2px;background:#e240ee;border-radius:2.5px;box-shadow:0 0 0 0.5px rgba(0,0,0,0.14);"></div>
<div style="position:absolute;left:1137.2px;top:113.7px;width:11.7px;height:11.2px;background:#ec8ef2;border-radius:2.5px;box-shadow:0 0 0 0.5px rgba(0,0,0,0.1);"></div>
<div style="position:absolute;left:1152.5px;top:98.5px;width:11.7px;height:11.2px;background:#ec5cee;border-radius:2.5px;box-shadow:0 0 0 0.5px rgba(0,0,0,0.14);"></div>
<div style="position:absolute;left:1152.5px;top:113.7px;width:11.7px;height:11.2px;background:#f6c6f6;border-radius:2.5px;box-shadow:0 0 0 0.5px rgba(0,0,0,0.1);"></div>
<div style="position:absolute;left:1170.8px;top:98.5px;width:11.7px;height:11.2px;background:#1ee41e;border-radius:2.5px;box-shadow:0 0 0 0.5px rgba(0,0,0,0.14);"></div>
<div style="position:absolute;left:1170.8px;top:113.7px;width:11.7px;height:11.2px;background:#84ee84;border-radius:2.5px;box-shadow:0 0 0 0.5px rgba(0,0,0,0.1);"></div>
<div style="position:absolute;left:1186.1px;top:98.5px;width:11.7px;height:11.2px;background:#44e044;border-radius:2.5px;box-shadow:0 0 0 0.5px rgba(0,0,0,0.14);"></div>
<div style="position:absolute;left:1186.1px;top:113.7px;width:11.7px;height:11.2px;background:#c0f6c0;border-radius:2.5px;box-shadow:0 0 0 0.5px rgba(0,0,0,0.1);"></div>
<div style="position:absolute;left:1204.4px;top:98.5px;width:11.7px;height:11.2px;background:#1ef0f4;border-radius:2.5px;box-shadow:0 0 0 0.5px rgba(0,0,0,0.14);"></div>
<div style="position:absolute;left:1204.4px;top:113.7px;width:11.7px;height:11.2px;background:#80eef2;border-radius:2.5px;box-shadow:0 0 0 0.5px rgba(0,0,0,0.1);"></div>
<div style="position:absolute;left:1219.7px;top:98.5px;width:11.7px;height:11.2px;background:#44eaf0;border-radius:2.5px;box-shadow:0 0 0 0.5px rgba(0,0,0,0.14);"></div>
<div style="position:absolute;left:1219.7px;top:113.7px;width:11.7px;height:11.2px;background:#c4f6f8;border-radius:2.5px;box-shadow:0 0 0 0.5px rgba(0,0,0,0.1);"></div>
<div style="position:absolute;left:1238.0px;top:98.5px;width:11.7px;height:11.2px;background:#f8f41e;border-radius:2.5px;box-shadow:0 0 0 0.5px rgba(0,0,0,0.14);"></div>
<div style="position:absolute;left:1238.0px;top:113.7px;width:11.7px;height:11.2px;background:#f8f288;border-radius:2.5px;box-shadow:0 0 0 0.5px rgba(0,0,0,0.1);"></div>
<div style="position:absolute;left:1253.3px;top:98.5px;width:11.7px;height:11.2px;background:#f4f040;border-radius:2.5px;box-shadow:0 0 0 0.5px rgba(0,0,0,0.14);"></div>
<div style="position:absolute;left:1253.3px;top:113.7px;width:11.7px;height:11.2px;background:#fbf6c4;border-radius:2.5px;box-shadow:0 0 0 0.5px rgba(0,0,0,0.1);"></div>
<div class="fld" style="left:1071px;top:131.5px;width:193px;height:13.0px;border-radius:2.5px;"></div><div style="position:absolute;left:1076px;top:132.1px;height:12.8px;line-height:12.8px;font-size:8.8px;color:#333;font-weight:normal;white-space:nowrap;">Normal</div><div class="blue" style="left:1253.5px;top:131.5px;width:10.5px;height:13.0px;"></div><svg style="position:absolute;left:1253.5px;top:133.0px;" width="10" height="10" viewBox="0 0 10 10"><path d="M2.8 3.8 L5 1.8 L7.2 3.8 M2.8 6.2 L5 8.2 L7.2 6.2" fill="none" stroke="#fff" stroke-width="1.15"/></svg>
<div class="fld" style="left:1071px;top:154px;width:126px;height:12.5px;border-radius:2.5px;"></div><div style="position:absolute;left:1076px;top:154.35px;height:12.8px;line-height:12.8px;font-size:8.8px;color:#333;font-weight:normal;white-space:nowrap;">No Effect</div><div class="blue" style="left:1186.5px;top:154px;width:10.5px;height:12.5px;"></div><svg style="position:absolute;left:1186.5px;top:155.25px;" width="10" height="10" viewBox="0 0 10 10"><path d="M2.8 3.8 L5 1.8 L7.2 3.8 M2.8 6.2 L5 8.2 L7.2 6.2" fill="none" stroke="#fff" stroke-width="1.15"/></svg>
<div style="position:absolute;left:1064px;top:174px;width:210px;height:1px;background:#dcdcdc;"></div>
<svg style="position:absolute;left:1062px;top:182px;" width="9" height="8" viewBox="0 0 9 8"><path d="M1 1.5 L8 1.5 L4.5 7Z" fill="#777"/></svg><div style="position:absolute;left:1073px;top:180.15px;height:12.7px;line-height:12.7px;font-size:8.7px;color:#1a1a1a;font-weight:bold;white-space:nowrap;">Stroke</div>
<div class="fld" style="left:1071px;top:198.5px;width:193px;height:12.0px;border-radius:2.5px;"></div><div class="blue" style="left:1253.5px;top:198.5px;width:10.5px;height:12.0px;"></div><svg style="position:absolute;left:1253.5px;top:199.5px;" width="10" height="10" viewBox="0 0 10 10"><path d="M2.8 3.8 L5 1.8 L7.2 3.8 M2.8 6.2 L5 8.2 L7.2 6.2" fill="none" stroke="#fff" stroke-width="1.15"/></svg>
<svg style="position:absolute;left:1076px;top:199px;" width="12" height="11" viewBox="0 0 12 11"><rect x="2" y="1.5" width="8" height="8" fill="none" stroke="#333" stroke-width="1"/><path d="M1.5 1 L3 2 M9 10 L10.5 9" stroke="#333" stroke-width="0.8"/></svg>
<div style="position:absolute;left:1091px;top:198.6px;height:12.8px;line-height:12.8px;font-size:8.8px;color:#333;font-weight:normal;white-space:nowrap;">Freehand Stroke</div>
<svg style="position:absolute;left:1069px;top:217px;" width="15" height="13" viewBox="0 0 15 13"><path d="M1 2 H13" stroke="#333" stroke-width="2.4"/><path d="M1 7 H13" stroke="#333" stroke-width="1.4"/><path d="M1 11.5 H13" stroke="#555" stroke-width="0.8"/></svg>
<div class="fld" style="left:1087px;top:218px;width:33.0px;height:11.5px;"></div><div style="position:absolute;left:1091px;top:217.8px;height:12.9px;line-height:12.9px;font-size:8.9px;color:#333;font-weight:normal;white-space:nowrap;">1 pt</div><div class="fld" style="left:1121.0px;top:218px;width:8.5px;height:11.5px;"></div><svg style="position:absolute;left:1121.5px;top:218.75px;" width="8" height="10" viewBox="0 0 8 10"><path d="M1.8 3.6 L3.8 1.6 L5.8 3.6 M1.8 6.4 L3.8 8.4 L5.8 6.4" fill="none" stroke="#555" stroke-width="1.05"/></svg>
<div class="fld" style="left:1135.5px;top:218px;width:49px;height:11.5px;border-radius:2px;"></div>
<div style="position:absolute;left:1140px;top:221px;width:33px;height:5.5px;background:#111;"></div>
<div class="blue" style="left:1174px;top:218px;width:10.5px;height:11.5px;"></div>
<svg style="position:absolute;left:1174px;top:219px;" width="10" height="10" viewBox="0 0 10 10"><path d="M2.8 3.8 L5 1.8 L7.2 3.8 M2.8 6.2 L5 8.2 L7.2 6.2" fill="none" stroke="#fff" stroke-width="1.15"/></svg>
<div class="fld" style="left:1071px;top:238.5px;width:58.5px;height:12.0px;border-radius:2.5px;"></div><div class="blue" style="left:1119.0px;top:238.5px;width:10.5px;height:12.0px;"></div><svg style="position:absolute;left:1119.0px;top:239.5px;" width="10" height="10" viewBox="0 0 10 10"><path d="M2.8 3.8 L5 1.8 L7.2 3.8 M2.8 6.2 L5 8.2 L7.2 6.2" fill="none" stroke="#fff" stroke-width="1.15"/></svg>
<div style="position:absolute;left:1077px;top:244px;width:39px;height:1px;background:#666;"></div>
<div class="fld" style="left:1139px;top:238.5px;width:58.5px;height:12px;border-radius:3px;"></div>
<div style="position:absolute;left:1159px;top:238.5px;width:20px;height:12px;background:linear-gradient(#428af2,#2163de);"></div>
<svg style="position:absolute;left:1142px;top:239px;" width="54" height="12" viewBox="0 0 54 12"><path d="M5 10 V3 H13" fill="none" stroke="#555" stroke-width="0.9"/><path d="M25 10 V7 Q25 3 30 3 H34" fill="none" stroke="#fff" stroke-width="1"/><path d="M42 10 Q44 3 51 3" fill="none" stroke="#555" stroke-width="0.9"/></svg>
<div class="fld" style="left:1206px;top:238.5px;width:58.5px;height:12px;border-radius:3px;"></div>
<div style="position:absolute;left:1226px;top:238.5px;width:20px;height:12px;background:linear-gradient(#428af2,#2163de);"></div>
<svg style="position:absolute;left:1206px;top:239px;" width="58" height="12" viewBox="0 0 58 12"><path d="M5 4 H15 M5 8 H15" stroke="#777" stroke-width="0.9"/><rect x="23.5" y="3" width="13" height="5.5" rx="2.7" fill="none" stroke="#fff" stroke-width="1"/><rect x="43.5" y="3" width="11" height="5.5" fill="none" stroke="#777" stroke-width="0.9"/></svg>
<div style="position:absolute;left:1064px;top:259.5px;width:210px;height:1px;background:#dcdcdc;"></div>
<svg style="position:absolute;left:1062px;top:268.0px;" width="9" height="9" viewBox="0 0 9 9"><path d="M2 1 L7.5 4.5 L2 8Z" fill="#777"/></svg><div style="position:absolute;left:1073px;top:266.65px;height:12.7px;line-height:12.7px;font-size:8.7px;color:#1a1a1a;font-weight:bold;white-space:nowrap;">Shadow</div>
<div style="position:absolute;left:1064px;top:284px;width:210px;height:1px;background:#dcdcdc;"></div>
<svg style="position:absolute;left:1062px;top:293px;" width="9" height="8" viewBox="0 0 9 8"><path d="M1 1.5 L8 1.5 L4.5 7Z" fill="#777"/></svg><div style="position:absolute;left:1073px;top:291.15px;height:12.7px;line-height:12.7px;font-size:8.7px;color:#1a1a1a;font-weight:bold;white-space:nowrap;">Shape</div>
<div class="fld" style="left:1071px;top:310.5px;width:193px;height:23.5px;border-radius:3px;"></div>
<div style="position:absolute;left:1074.5px;top:313.5px;width:18px;height:17.5px;border:1px solid #555;background:#fff;"></div>
<div style="position:absolute;left:1117.0px;top:316.6px;width:120px;height:12.8px;line-height:12.8px;text-align:center;font-size:8.8px;color:#333;font-weight:normal;white-space:nowrap;">Rectangle</div>
<svg style="position:absolute;left:1068px;top:340px;" width="15" height="15" viewBox="0 0 15 15"><path d="M2 13 Q3 4 13 3" fill="none" stroke="#444" stroke-width="1"/><circle cx="2.5" cy="3" r="1.2" fill="none" stroke="#444" stroke-width="0.7"/><circle cx="13" cy="2.5" r="1.2" fill="none" stroke="#444" stroke-width="0.7"/><circle cx="2.5" cy="13" r="1.2" fill="none" stroke="#444" stroke-width="0.7"/></svg>
<div class="fld" style="left:1086.5px;top:341.5px;width:33.5px;height:13.0px;"></div><div style="position:absolute;left:1090.5px;top:342.05px;height:12.9px;line-height:12.9px;font-size:8.9px;color:#333;font-weight:normal;white-space:nowrap;">8 pt</div><div class="fld" style="left:1121.0px;top:341.5px;width:8.5px;height:13.0px;"></div><svg style="position:absolute;left:1121.5px;top:343.0px;" width="8" height="10" viewBox="0 0 8 10"><path d="M1.8 3.6 L3.8 1.6 L5.8 3.6 M1.8 6.4 L3.8 8.4 L5.8 6.4" fill="none" stroke="#555" stroke-width="1.05"/></svg>
<div style="position:absolute;left:1071px;top:360.5px;width:25px;height:13px;border-radius:3px;background:#efefef;box-shadow:0 0 0 0.5px rgba(0,0,0,0.07);"></div>
<div style="position:absolute;left:1104px;top:360.5px;width:25px;height:13px;border-radius:3px;background:#efefef;box-shadow:0 0 0 0.5px rgba(0,0,0,0.07);"></div>
<div style="position:absolute;left:1137px;top:360.5px;width:26px;height:13px;border-radius:3px;background:#efefef;box-shadow:0 0 0 0.5px rgba(0,0,0,0.07);"></div>
<div style="position:absolute;left:1238px;top:360.5px;width:26px;height:13px;border-radius:3px;background:#efefef;box-shadow:0 0 0 0.5px rgba(0,0,0,0.07);"></div>
<svg style="position:absolute;left:1078px;top:361px;" width="12" height="12" viewBox="0 0 12 12"><rect x="2" y="2" width="5" height="5" fill="none" stroke="#ccc" stroke-width="0.8"/><rect x="4.5" y="4.5" width="5" height="5" fill="none" stroke="#ccc" stroke-width="0.8"/></svg>
<svg style="position:absolute;left:1111px;top:361px;" width="12" height="12" viewBox="0 0 12 12"><path d="M2 6 H10 M6 2 V6" stroke="#ccc" stroke-width="0.8"/></svg>
<svg style="position:absolute;left:1144px;top:361px;" width="12" height="12" viewBox="0 0 12 12"><rect x="3" y="2" width="6" height="5" fill="none" stroke="#ccc" stroke-width="0.8"/><path d="M2 9 L5 7" stroke="#ccc" stroke-width="0.8"/></svg>
<svg style="position:absolute;left:1245px;top:361px;" width="12" height="12" viewBox="0 0 12 12"><circle cx="5" cy="5" r="3" fill="none" stroke="#ccc" stroke-width="0.8"/><rect x="5" y="5" width="5" height="5" fill="none" stroke="#ccc" stroke-width="0.8"/></svg>
<div style="position:absolute;left:1064px;top:383px;width:210px;height:1px;background:#dcdcdc;"></div>
<svg style="position:absolute;left:1062px;top:391px;" width="9" height="8" viewBox="0 0 9 8"><path d="M1 1.5 L8 1.5 L4.5 7Z" fill="#777"/></svg><div style="position:absolute;left:1073px;top:389.15px;height:12.7px;line-height:12.7px;font-size:8.7px;color:#1a1a1a;font-weight:bold;white-space:nowrap;">Line</div>
<div class="fld" style="left:1071px;top:408.5px;width:193px;height:11.5px;border-radius:2.5px;background:#f2f2f2;box-shadow:0 0 0 0.5px rgba(0,0,0,0.05),0 0.5px 0.5px rgba(0,0,0,0.08);"></div><svg style="position:absolute;left:1253.5px;top:409.25px;" width="10" height="10" viewBox="0 0 10 10"><path d="M2.8 3.8 L5 1.8 L7.2 3.8 M2.8 6.2 L5 8.2 L7.2 6.2" fill="none" stroke="#bbb" stroke-width="1"/></svg>
<div class="fld" style="left:1071px;top:427.5px;width:55px;height:11.5px;border-radius:2.5px;background:#f2f2f2;box-shadow:0 0 0 0.5px rgba(0,0,0,0.05),0 0.5px 0.5px rgba(0,0,0,0.08);"></div><svg style="position:absolute;left:1115.5px;top:428.25px;" width="10" height="10" viewBox="0 0 10 10"><path d="M2.8 3.8 L5 1.8 L7.2 3.8 M2.8 6.2 L5 8.2 L7.2 6.2" fill="none" stroke="#bbb" stroke-width="1"/></svg>
<div style="position:absolute;left:1138px;top:427.5px;width:58px;height:11.5px;border-radius:3px;background:#f2f2f2;box-shadow:0 0 0 0.5px rgba(0,0,0,0.06);"></div>
<svg style="position:absolute;left:1160px;top:428px;" width="14" height="11" viewBox="0 0 14 11"><path d="M3 4 H11 M9 2 L11 4 M11 7 H3 M5 9 L3 7" fill="none" stroke="#ccc" stroke-width="0.9"/></svg>
<div class="fld" style="left:1209px;top:427.5px;width:55px;height:11.5px;border-radius:2.5px;background:#f2f2f2;box-shadow:0 0 0 0.5px rgba(0,0,0,0.05),0 0.5px 0.5px rgba(0,0,0,0.08);"></div><svg style="position:absolute;left:1253.5px;top:428.25px;" width="10" height="10" viewBox="0 0 10 10"><path d="M2.8 3.8 L5 1.8 L7.2 3.8 M2.8 6.2 L5 8.2 L7.2 6.2" fill="none" stroke="#bbb" stroke-width="1"/></svg>
<div class="fld" style="left:1071px;top:448px;width:45.5px;height:12.5px;box-shadow:0 0 0 0.5px rgba(0,0,0,0.07),0 0.5px 0.5px rgba(0,0,0,0.08);"></div><div style="position:absolute;left:1075px;top:448.3px;height:12.9px;line-height:12.9px;font-size:8.9px;color:#333;font-weight:normal;white-space:nowrap;"></div><div class="fld" style="left:1117.5px;top:448px;width:8.5px;height:12.5px;box-shadow:0 0 0 0.5px rgba(0,0,0,0.07),0 0.5px 0.5px rgba(0,0,0,0.08);"></div><svg style="position:absolute;left:1118.0px;top:449.25px;" width="8" height="10" viewBox="0 0 8 10"><path d="M1.8 3.6 L3.8 1.6 L5.8 3.6 M1.8 6.4 L3.8 8.4 L5.8 6.4" fill="none" stroke="#bbb" stroke-width="1.05"/></svg>
<svg style="position:absolute;left:1135px;top:447px;" width="15" height="14" viewBox="0 0 15 14"><path d="M2 12 Q3 4 13 3" fill="none" stroke="#999" stroke-width="1"/><circle cx="2.5" cy="3" r="1.1" fill="none" stroke="#999" stroke-width="0.7"/><circle cx="13" cy="2.5" r="1.1" fill="none" stroke="#999" stroke-width="0.7"/><circle cx="2.5" cy="12" r="1.1" fill="none" stroke="#999" stroke-width="0.7"/></svg>
<div class="fld" style="left:1153px;top:448px;width:35.0px;height:12.5px;box-shadow:0 0 0 0.5px rgba(0,0,0,0.07),0 0.5px 0.5px rgba(0,0,0,0.08);"></div><div style="position:absolute;left:1157px;top:448.3px;height:12.9px;line-height:12.9px;font-size:8.9px;color:#333;font-weight:normal;white-space:nowrap;"></div><div class="fld" style="left:1189.0px;top:448px;width:8.5px;height:12.5px;box-shadow:0 0 0 0.5px rgba(0,0,0,0.07),0 0.5px 0.5px rgba(0,0,0,0.08);"></div><svg style="position:absolute;left:1189.5px;top:449.25px;" width="8" height="10" viewBox="0 0 8 10"><path d="M1.8 3.6 L3.8 1.6 L5.8 3.6 M1.8 6.4 L3.8 8.4 L5.8 6.4" fill="none" stroke="#bbb" stroke-width="1.05"/></svg>
<div class="fld" style="left:1209px;top:448px;width:45.5px;height:12.5px;box-shadow:0 0 0 0.5px rgba(0,0,0,0.07),0 0.5px 0.5px rgba(0,0,0,0.08);"></div><div style="position:absolute;left:1213px;top:448.3px;height:12.9px;line-height:12.9px;font-size:8.9px;color:#333;font-weight:normal;white-space:nowrap;"></div><div class="fld" style="left:1255.5px;top:448px;width:8.5px;height:12.5px;box-shadow:0 0 0 0.5px rgba(0,0,0,0.07),0 0.5px 0.5px rgba(0,0,0,0.08);"></div><svg style="position:absolute;left:1256.0px;top:449.25px;" width="8" height="10" viewBox="0 0 8 10"><path d="M1.8 3.6 L3.8 1.6 L5.8 3.6 M1.8 6.4 L3.8 8.4 L5.8 6.4" fill="none" stroke="#bbb" stroke-width="1.05"/></svg>
<div style="position:absolute;left:1050.5px;top:468.1px;width:80px;height:12.8px;line-height:12.8px;text-align:right;font-size:8.8px;color:#aaa;font-weight:normal;white-space:nowrap;">Line Hops:</div>
<div class="fld" style="left:1137px;top:468px;width:126px;height:11.5px;border-radius:2.5px;background:#f2f2f2;box-shadow:0 0 0 0.5px rgba(0,0,0,0.05),0 0.5px 0.5px rgba(0,0,0,0.08);"></div><svg style="position:absolute;left:1252.5px;top:468.75px;" width="10" height="10" viewBox="0 0 10 10"><path d="M2.8 3.8 L5 1.8 L7.2 3.8 M2.8 6.2 L5 8.2 L7.2 6.2" fill="none" stroke="#bbb" stroke-width="1"/></svg>
<div style="position:absolute;left:1064px;top:489px;width:210px;height:1px;background:#dcdcdc;"></div>
<svg style="position:absolute;left:1062px;top:497.0px;" width="9" height="9" viewBox="0 0 9 9"><path d="M2 1 L7.5 4.5 L2 8Z" fill="#777"/></svg><div style="position:absolute;left:1073px;top:495.65px;height:12.7px;line-height:12.7px;font-size:8.7px;color:#1a1a1a;font-weight:bold;white-space:nowrap;">Image</div>
<div style="position:absolute;left:1064px;top:512.5px;width:210px;height:1px;background:#dcdcdc;"></div>
<svg style="position:absolute;left:1062px;top:522px;" width="9" height="8" viewBox="0 0 9 8"><path d="M1 1.5 L8 1.5 L4.5 7Z" fill="#777"/></svg><div style="position:absolute;left:1073px;top:520.15px;height:12.7px;line-height:12.7px;font-size:8.7px;color:#1a1a1a;font-weight:bold;white-space:nowrap;">Font</div>
<div class="fld" style="left:1071px;top:538px;width:126px;height:12.5px;border-radius:2.5px;"></div><div style="position:absolute;left:1076px;top:538.35px;height:12.8px;line-height:12.8px;font-size:8.8px;color:#333;font-weight:normal;white-space:nowrap;">Helvetica Neue</div><div class="blue" style="left:1186.5px;top:538px;width:10.5px;height:12.5px;"></div><svg style="position:absolute;left:1186.5px;top:539.25px;" width="10" height="10" viewBox="0 0 10 10"><path d="M2.5 4 L5 6.5 L7.5 4" fill="none" stroke="#fff" stroke-width="1.2"/></svg>
<svg style="position:absolute;left:1202px;top:536px;" width="16" height="16" viewBox="0 0 16 16"><path d="M1.5 2 H6.5 M4 2 V14 M1.5 14 H6.5" stroke="#444" stroke-width="0.9"/><text x="11" y="13.5" font-size="12.5" font-style="italic" text-anchor="middle" fill="#333" font-family="Liberation Serif">A</text></svg>
<div class="fld" style="left:1220.5px;top:538px;width:34.0px;height:12.5px;"></div><div style="position:absolute;left:1224.5px;top:538.3px;height:12.9px;line-height:12.9px;font-size:8.9px;color:#333;font-weight:normal;white-space:nowrap;">16</div><div class="fld" style="left:1255.5px;top:538px;width:8.5px;height:12.5px;"></div><svg style="position:absolute;left:1256.0px;top:539.25px;" width="8" height="10" viewBox="0 0 8 10"><path d="M1.8 3.6 L3.8 1.6 L5.8 3.6 M1.8 6.4 L3.8 8.4 L5.8 6.4" fill="none" stroke="#555" stroke-width="1.05"/></svg>
<div class="fld" style="left:1071px;top:558.5px;width:126px;height:12.5px;border-radius:2.5px;"></div><div style="position:absolute;left:1076px;top:558.85px;height:12.8px;line-height:12.8px;font-size:8.8px;color:#333;font-weight:normal;white-space:nowrap;">Regolare</div><div class="blue" style="left:1186.5px;top:558.5px;width:10.5px;height:12.5px;"></div><svg style="position:absolute;left:1186.5px;top:559.75px;" width="10" height="10" viewBox="0 0 10 10"><path d="M2.8 3.8 L5 1.8 L7.2 3.8 M2.8 6.2 L5 8.2 L7.2 6.2" fill="none" stroke="#fff" stroke-width="1.15"/></svg>
<div class="fld" style="left:1203.5px;top:558.5px;width:60.5px;height:12.5px;border-radius:2px;"></div>
<div style="position:absolute;left:1207px;top:561.5px;width:44px;height:6.5px;background:#111;"></div>
<div class="blue" style="left:1253.5px;top:558.5px;width:10.5px;height:12.5px;"></div>
<svg style="position:absolute;left:1253.5px;top:560px;" width="10" height="10" viewBox="0 0 10 10"><path d="M2.8 3.8 L5 1.8 L7.2 3.8 M2.8 6.2 L5 8.2 L7.2 6.2" fill="none" stroke="#fff" stroke-width="1.15"/></svg>
<div style="position:absolute;left:1069.5px;top:580.5px;width:9.5px;height:9.5px;background:#3378d6;border-radius:2px;"></div>
<svg style="position:absolute;left:1069.5px;top:580.5px;" width="10" height="10" viewBox="0 0 10 10"><path d="M2.3 5 L4.2 7 L7.8 2.8" fill="none" stroke="#fff" stroke-width="1.3"/></svg>
<div style="position:absolute;left:1083px;top:579.1px;height:12.8px;line-height:12.8px;font-size:8.8px;color:#444;font-weight:normal;white-space:nowrap;">Auto-Kern</div>
<svg style="position:absolute;left:1136px;top:578px;" width="15" height="14" viewBox="0 0 15 14"><path d="M2 4 H13 M3 10 H12" stroke="#aaa" stroke-width="0.8"/><text x="7.5" y="8" font-size="6" text-anchor="middle" fill="#aaa" font-family="Liberation Sans">A W</text></svg>
<div class="fld" style="left:1153.5px;top:578.5px;width:34.0px;height:13.0px;box-shadow:0 0 0 0.5px rgba(0,0,0,0.07),0 0.5px 0.5px rgba(0,0,0,0.08);"></div><div style="position:absolute;left:1157.5px;top:579.05px;height:12.9px;line-height:12.9px;font-size:8.9px;color:#bbb;font-weight:normal;white-space:nowrap;">0</div><div class="fld" style="left:1188.5px;top:578.5px;width:8.5px;height:13.0px;box-shadow:0 0 0 0.5px rgba(0,0,0,0.07),0 0.5px 0.5px rgba(0,0,0,0.08);"></div><svg style="position:absolute;left:1189.0px;top:580.0px;" width="8" height="10" viewBox="0 0 8 10"><path d="M1.8 3.6 L3.8 1.6 L5.8 3.6 M1.8 6.4 L3.8 8.4 L5.8 6.4" fill="none" stroke="#bbb" stroke-width="1.05"/></svg>
<svg style="position:absolute;left:1203px;top:577px;" width="15" height="15" viewBox="0 0 15 15"><text x="9" y="7" font-size="6" fill="#444" font-family="Liberation Sans">Aa</text><text x="9" y="14" font-size="6" fill="#444" font-family="Liberation Sans">Aa</text><path d="M4 2 V13 M2 4 L4 2 L6 4 M2 11 L4 13 L6 11" fill="none" stroke="#444" stroke-width="0.8"/></svg>
<div class="fld" style="left:1219.5px;top:578.5px;width:35.0px;height:13.0px;"></div><div style="position:absolute;left:1223.5px;top:579.05px;height:12.9px;line-height:12.9px;font-size:8.9px;color:#333;font-weight:normal;white-space:nowrap;">0</div><div class="fld" style="left:1255.5px;top:578.5px;width:8.5px;height:13.0px;"></div><svg style="position:absolute;left:1256.0px;top:580.0px;" width="8" height="10" viewBox="0 0 8 10"><path d="M1.8 3.6 L3.8 1.6 L5.8 3.6 M1.8 6.4 L3.8 8.4 L5.8 6.4" fill="none" stroke="#555" stroke-width="1.05"/></svg>
<div style="position:absolute;left:1064px;top:600px;width:210px;height:1px;background:#dcdcdc;"></div>
<svg style="position:absolute;left:1062px;top:609.0px;" width="9" height="9" viewBox="0 0 9 9"><path d="M2 1 L7.5 4.5 L2 8Z" fill="#777"/></svg><div style="position:absolute;left:1073px;top:607.65px;height:12.7px;line-height:12.7px;font-size:8.7px;color:#1a1a1a;font-weight:bold;white-space:nowrap;">Text Position</div>
<div style="position:absolute;left:1064px;top:624.5px;width:210px;height:1px;background:#dcdcdc;"></div>
<svg style="position:absolute;left:1062px;top:633px;" width="9" height="8" viewBox="0 0 9 8"><path d="M1 1.5 L8 1.5 L4.5 7Z" fill="#777"/></svg><div style="position:absolute;left:1073px;top:631.15px;height:12.7px;line-height:12.7px;font-size:8.7px;color:#1a1a1a;font-weight:bold;white-space:nowrap;">Geometry</div>
<div class="fld" style="left:1071px;top:649.5px;width:193px;height:12.0px;border-radius:2.5px;"></div><div style="position:absolute;left:1076px;top:649.6px;height:12.8px;line-height:12.8px;font-size:8.8px;color:#333;font-weight:normal;white-space:nowrap;">No Scaling</div><div class="blue" style="left:1253.5px;top:649.5px;width:10.5px;height:12.0px;"></div><svg style="position:absolute;left:1253.5px;top:650.5px;" width="10" height="10" viewBox="0 0 10 10"><path d="M2.8 3.8 L5 1.8 L7.2 3.8 M2.8 6.2 L5 8.2 L7.2 6.2" fill="none" stroke="#fff" stroke-width="1.15"/></svg>
<svg style="position:absolute;left:1068px;top:668px;" width="16" height="16" viewBox="0 0 16 16"><path d="M1.5 2 V14" stroke="#5a8ad6" stroke-width="0.85"/><path d="M2 8 H14" stroke="#5a8ad6" stroke-width="0.85"/><path d="M11 5.5 L14.5 8 L11 10.5" fill="none" stroke="#5a8ad6" stroke-width="0.85"/></svg>
<div class="fld" style="left:1086.5px;top:670px;width:67.5px;height:12px;"></div><div style="position:absolute;left:1090.5px;top:670.05px;height:12.9px;line-height:12.9px;font-size:8.9px;color:#333;font-weight:normal;white-space:nowrap;">586 px</div><div class="fld" style="left:1155.0px;top:670px;width:8.5px;height:12px;"></div><svg style="position:absolute;left:1155.5px;top:671.0px;" width="8" height="10" viewBox="0 0 8 10"><path d="M1.8 3.6 L3.8 1.6 L5.8 3.6 M1.8 6.4 L3.8 8.4 L5.8 6.4" fill="none" stroke="#555" stroke-width="1.05"/></svg>
<svg style="position:absolute;left:1169px;top:668px;" width="15" height="16" viewBox="0 0 15 16"><path d="M1 1.5 H14" stroke="#5a8ad6" stroke-width="0.85"/><path d="M7.5 2 V14" stroke="#5a8ad6" stroke-width="0.85"/><path d="M5 11 L7.5 14.5 L10 11" fill="none" stroke="#5a8ad6" stroke-width="0.85"/></svg>
<div class="fld" style="left:1187px;top:670px;width:67.5px;height:12px;"></div><div style="position:absolute;left:1191px;top:670.05px;height:12.9px;line-height:12.9px;font-size:8.9px;color:#333;font-weight:normal;white-space:nowrap;">-540 px</div><div class="fld" style="left:1255.5px;top:670px;width:8.5px;height:12px;"></div><svg style="position:absolute;left:1256.0px;top:671.0px;" width="8" height="10" viewBox="0 0 8 10"><path d="M1.8 3.6 L3.8 1.6 L5.8 3.6 M1.8 6.4 L3.8 8.4 L5.8 6.4" fill="none" stroke="#555" stroke-width="1.05"/></svg>
<svg style="position:absolute;left:1068px;top:688px;" width="16" height="16" viewBox="0 0 16 16"><path d="M1.5 2 V14 M14.5 2 V14" stroke="#555" stroke-width="0.9"/><path d="M2.5 8 H13.5" stroke="#777" stroke-width="0.8"/><path d="M5 6 L2.5 8 L5 10 M11 6 L13.5 8 L11 10" fill="none" stroke="#777" stroke-width="0.8"/></svg>
<div class="fld" style="left:1086.5px;top:690px;width:67.5px;height:12px;"></div><div style="position:absolute;left:1090.5px;top:690.05px;height:12.9px;line-height:12.9px;font-size:8.9px;color:#333;font-weight:normal;white-space:nowrap;">195 px</div><div class="fld" style="left:1155.0px;top:690px;width:8.5px;height:12px;"></div><svg style="position:absolute;left:1155.5px;top:691.0px;" width="8" height="10" viewBox="0 0 8 10"><path d="M1.8 3.6 L3.8 1.6 L5.8 3.6 M1.8 6.4 L3.8 8.4 L5.8 6.4" fill="none" stroke="#555" stroke-width="1.05"/></svg>
<svg style="position:absolute;left:1169px;top:687px;" width="15" height="18" viewBox="0 0 15 18"><path d="M1 1.5 H14 M1 16.5 H14" stroke="#555" stroke-width="0.9"/><path d="M7.5 2.5 V15.5" stroke="#777" stroke-width="0.8"/><path d="M5.3 5 L7.5 2.5 L9.7 5 M5.3 13 L7.5 15.5 L9.7 13" fill="none" stroke="#777" stroke-width="0.8"/></svg>
<div class="fld" style="left:1187px;top:690px;width:67.5px;height:12px;"></div><div style="position:absolute;left:1191px;top:690.05px;height:12.9px;line-height:12.9px;font-size:8.9px;color:#333;font-weight:normal;white-space:nowrap;">78 px</div><div class="fld" style="left:1255.5px;top:690px;width:8.5px;height:12px;"></div><svg style="position:absolute;left:1256.0px;top:691.0px;" width="8" height="10" viewBox="0 0 8 10"><path d="M1.8 3.6 L3.8 1.6 L5.8 3.6 M1.8 6.4 L3.8 8.4 L5.8 6.4" fill="none" stroke="#555" stroke-width="1.05"/></svg>
<div style="position:absolute;left:1070.5px;top:709.5px;width:12px;height:12px;border-radius:50%;background:#fff;box-shadow:0 0 0 0.5px rgba(0,0,0,0.2),0 0.5px 1px rgba(0,0,0,0.2);"></div>
<div style="position:absolute;left:1075.5px;top:711.5px;width:2px;height:2px;background:#444;border-radius:1px;"></div>
<div class="fld" style="left:1087px;top:709.5px;width:29.5px;height:12.5px;"></div><div style="position:absolute;left:1091px;top:709.8px;height:12.9px;line-height:12.9px;font-size:8.9px;color:#333;font-weight:normal;white-space:nowrap;">0°</div>
<div class="btn" style="left:1124px;top:709.5px;width:22px;height:12.5px;"></div>
<svg style="position:absolute;left:1128px;top:709px;" width="14" height="13" viewBox="0 0 14 13"><path d="M4 5.5 L10 4 M8.2 2.5 L10.5 3.9 L8.8 5.8 M10 7.5 L4 9 M5.8 10.5 L3.5 9.1 L5.2 7.2" fill="none" stroke="#666" stroke-width="0.9"/></svg>
<div class="btn" style="left:1151.5px;top:709.5px;width:22.5px;height:12.5px;"></div>
<svg style="position:absolute;left:1156px;top:709px;" width="14" height="14" viewBox="0 0 14 14"><path d="M5 11 V3 M3.3 4.8 L5 3 L6.7 4.8 M9 4 V12 M7.3 10.2 L9 12 L10.7 10.2" fill="none" stroke="#666" stroke-width="0.9"/></svg>
<div style="position:absolute;left:1064px;top:751.5px;width:210px;height:1px;background:#dcdcdc;"></div>
<svg style="position:absolute;left:1062px;top:760.0px;" width="9" height="9" viewBox="0 0 9 9"><path d="M2 1 L7.5 4.5 L2 8Z" fill="#777"/></svg><div style="position:absolute;left:1073px;top:758.65px;height:12.7px;line-height:12.7px;font-size:8.7px;color:#1a1a1a;font-weight:bold;white-space:nowrap;">Alignment</div>
<div style="position:absolute;left:153px;top:776px;width:1127px;height:24px;background:linear-gradient(#e4e4e4,#dcdcdc);border-top:1px solid #c9c9c9;"></div>
<svg style="position:absolute;left:155px;top:781px;" width="7" height="12" viewBox="0 0 7 12"><path d="M1 1 V11 M3.5 1 V11 M6 1 V11" stroke="#999" stroke-width="0.8"/></svg>
<div style="position:absolute;left:477.0px;top:782.6500000000001px;width:200px;height:13.1px;line-height:13.1px;text-align:center;font-size:9.1px;color:#333;font-weight:normal;white-space:nowrap;">1 of 2 objects selected</div>
<div class="fld" style="left:1001px;top:779px;width:34px;height:16px;border-radius:3px;"></div>
<div style="position:absolute;left:1004px;top:781.95px;height:12.1px;line-height:12.1px;font-size:8.1px;color:#666;font-weight:normal;white-space:nowrap;">93%</div>
<svg style="position:absolute;left:1024px;top:781px;" width="9" height="12" viewBox="0 0 9 12"><path d="M2 4.5 L4.5 2 L7 4.5 M2 7.5 L4.5 10 L7 7.5" fill="none" stroke="#555" stroke-width="1"/></svg>
<div style="position:absolute;left:1053px;top:776px;width:1px;height:24px;background:#cfcfcf;"></div>
<div class="btn" style="left:1058.5px;top:779px;width:18px;height:16px;border-radius:3px;"></div>
<div style="position:absolute;left:1062px;top:782px;width:11px;height:10px;border:1px solid #999;background:#fff;"></div>
<svg style="position:absolute;left:1062px;top:782px;" width="11" height="10" viewBox="0 0 11 10"><text x="5.5" y="7.5" font-size="6" text-anchor="middle" fill="#666" font-family="Liberation Sans">A</text></svg>
<div class="btn" style="left:1081.5px;top:779px;width:100.5px;height:16px;border-radius:3px;"></div>
<svg style="position:absolute;left:1081.5px;top:780px;" width="100" height="14" viewBox="0 0 100 14"><rect x="3.5" y="1.5" width="11.5" height="11.5" fill="#fff" stroke="#bbb" stroke-width="0.8"/><path d="M16.5 7 H29.5" stroke="#777" stroke-width="1.2"/><rect x="33.5" y="3" width="9" height="9" fill="#e8e8f0" stroke="#aaa" stroke-width="0.6"/><path d="M32 13 L43 2" stroke="#e06060" stroke-width="0.8"/><rect x="47.5" y="3" width="8.5" height="8.5" fill="#6e6060"/><path d="M46 13 L57 2" stroke="#e06060" stroke-width="0.8"/><rect x="59.5" y="1.5" width="10.5" height="11" fill="#fafafa" stroke="#777" stroke-width="0.8"/><text x="79" y="12.2" font-size="12.5" text-anchor="middle" fill="#222" font-family="Liberation Sans">A</text><rect x="87" y="1.5" width="11" height="11" fill="#fff" stroke="#c9a8d8" stroke-width="0.8"/><path d="M92.5 3 V11 M89.5 7 H95.5" stroke="#c9a8d8" stroke-width="0.8"/></svg>
<div style="position:absolute;left:816px;top:77.5px;width:244px;height:491.5px;box-shadow:0 2px 6px rgba(0,0,0,0.22);border-radius:0 0 4px 4px;"></div><svg style="position:absolute;left:816px;top:77.5px;" width="244" height="491.5" viewBox="0 0 244 491.5"><rect x="0.5" y="0.5" width="243" height="490.5" fill="#eeeeee" stroke="#cfcfcf"/><rect x="1" y="0.0" width="242" height="15.0" fill="#f2f2f2"/><text x="8.5" y="12.2" font-size="12" font-weight="bold" fill="#2a2a2a" font-family="Liberation Sans">Common</text><rect x="1" y="114.0" width="242" height="16.5" fill="#f2f2f2"/><text x="8.5" y="127.7" font-size="12" font-weight="bold" fill="#2a2a2a" font-family="Liberation Sans">Adjustable</text><rect x="1" y="180.0" width="242" height="17.0" fill="#f2f2f2"/><text x="8.5" y="194.2" font-size="12" font-weight="bold" fill="#2a2a2a" font-family="Liberation Sans">Uncommon</text><rect x="0.50" y="15.50" width="47.80" height="49.00" fill="#b6d6fb"/><rect x="49.30" y="15.50" width="47.80" height="49.00" fill="#ededed"/><rect x="98.10" y="15.50" width="47.80" height="49.00" fill="#ededed"/><rect x="146.90" y="15.50" width="47.80" height="49.00" fill="#ededed"/><rect x="195.70" y="15.50" width="47.80" height="49.00" fill="#ededed"/><path d="M1 65.00 H243" stroke="#e0e0e0" stroke-width="1"/><path d="M48.80 15.00 V65.00" stroke="#e0e0e0" stroke-width="1"/><path d="M97.60 15.00 V65.00" stroke="#e0e0e0" stroke-width="1"/><path d="M146.40 15.00 V65.00" stroke="#e0e0e0" stroke-width="1"/><path d="M195.20 15.00 V65.00" stroke="#e0e0e0" stroke-width="1"/><rect x="0.50" y="65.50" width="47.80" height="48.00" fill="#ededed"/><rect x="49.30" y="65.50" width="47.80" height="48.00" fill="#ededed"/><rect x="98.10" y="65.50" width="47.80" height="48.00" fill="#ededed"/><rect x="146.90" y="65.50" width="47.80" height="48.00" fill="#ededed"/><rect x="195.70" y="65.50" width="47.80" height="48.00" fill="#ededed"/><path d="M1 114.00 H243" stroke="#e0e0e0" stroke-width="1"/><path d="M48.80 65.00 V114.00" stroke="#e0e0e0" stroke-width="1"/><path d="M97.60 65.00 V114.00" stroke="#e0e0e0" stroke-width="1"/><path d="M146.40 65.00 V114.00" stroke="#e0e0e0" stroke-width="1"/><path d="M195.20 65.00 V114.00" stroke="#e0e0e0" stroke-width="1"/><path d="M1 15.00 H243" stroke="#e0e0e0" stroke-width="1"/><rect x="0.50" y="131.00" width="47.80" height="48.50" fill="#ededed"/><rect x="49.30" y="131.00" width="47.80" height="48.50" fill="#ededed"/><rect x="98.10" y="131.00" width="47.80" height="48.50" fill="#ededed"/><rect x="146.90" y="131.00" width="47.80" height="48.50" fill="#ededed"/><rect x="195.70" y="131.00" width="47.80" height="48.50" fill="#ededed"/><path d="M1 180.00 H243" stroke="#e0e0e0" stroke-width="1"/><path d="M48.80 130.50 V180.00" stroke="#e0e0e0" stroke-width="1"/><path d="M97.60 130.50 V180.00" stroke="#e0e0e0" stroke-width="1"/><path d="M146.40 130.50 V180.00" stroke="#e0e0e0" stroke-width="1"/><path d="M195.20 130.50 V180.00" stroke="#e0e0e0" stroke-width="1"/><path d="M1 130.50 H243" stroke="#e0e0e0" stroke-width="1"/><rect x="0.50" y="197.50" width="47.80" height="48.50" fill="#ededed"/><rect x="49.30" y="197.50" width="47.80" height="48.50" fill="#ededed"/><rect x="98.10" y="197.50" width="47.80" height="48.50" fill="#ededed"/><rect x="146.90" y="197.50" width="47.80" height="48.50" fill="#ededed"/><rect x="195.70" y="197.50" width="47.80" height="48.50" fill="#ededed"/><path d="M1 246.50 H243" stroke="#e0e0e0" stroke-width="1"/><path d="M48.80 197.00 V246.50" stroke="#e0e0e0" stroke-width="1"/><path d="M97.60 197.00 V246.50" stroke="#e0e0e0" stroke-width="1"/><path d="M146.40 197.00 V246.50" stroke="#e0e0e0" stroke-width="1"/><path d="M195.20 197.00 V246.50" stroke="#e0e0e0" stroke-width="1"/><rect x="0.50" y="247.00" width="47.80" height="48.00" fill="#ededed"/><rect x="49.30" y="247.00" width="47.80" height="48.00" fill="#ededed"/><rect x="98.10" y="247.00" width="47.80" height="48.00" fill="#ededed"/><rect x="146.90" y="247.00" width="47.80" height="48.00" fill="#ededed"/><rect x="195.70" y="247.00" width="47.80" height="48.00" fill="#ededed"/><path d="M1 295.50 H243" stroke="#e0e0e0" stroke-width="1"/><path d="M48.80 246.50 V295.50" stroke="#e0e0e0" stroke-width="1"/><path d="M97.60 246.50 V295.50" stroke="#e0e0e0" stroke-width="1"/><path d="M146.40 246.50 V295.50" stroke="#e0e0e0" stroke-width="1"/><path d="M195.20 246.50 V295.50" stroke="#e0e0e0" stroke-width="1"/><rect x="0.50" y="296.00" width="47.80" height="48.00" fill="#ededed"/><rect x="49.30" y="296.00" width="47.80" height="48.00" fill="#ededed"/><rect x="98.10" y="296.00" width="47.80" height="48.00" fill="#ededed"/><rect x="146.90" y="296.00" width="47.80" height="48.00" fill="#ededed"/><rect x="195.70" y="296.00" width="47.80" height="48.00" fill="#ededed"/><path d="M1 344.50 H243" stroke="#e0e0e0" stroke-width="1"/><path d="M48.80 295.50 V344.50" stroke="#e0e0e0" stroke-width="1"/><path d="M97.60 295.50 V344.50" stroke="#e0e0e0" stroke-width="1"/><path d="M146.40 295.50 V344.50" stroke="#e0e0e0" stroke-width="1"/><path d="M195.20 295.50 V344.50" stroke="#e0e0e0" stroke-width="1"/><rect x="0.50" y="345.00" width="47.80" height="47.50" fill="#ededed"/><rect x="49.30" y="345.00" width="47.80" height="47.50" fill="#ededed"/><rect x="98.10" y="345.00" width="47.80" height="47.50" fill="#ededed"/><rect x="146.90" y="345.00" width="47.80" height="47.50" fill="#ededed"/><rect x="195.70" y="345.00" width="47.80" height="47.50" fill="#ededed"/><path d="M1 393.00 H243" stroke="#e0e0e0" stroke-width="1"/><path d="M48.80 344.50 V393.00" stroke="#e0e0e0" stroke-width="1"/><path d="M97.60 344.50 V393.00" stroke="#e0e0e0" stroke-width="1"/><path d="M146.40 344.50 V393.00" stroke="#e0e0e0" stroke-width="1"/><path d="M195.20 344.50 V393.00" stroke="#e0e0e0" stroke-width="1"/><rect x="0.50" y="393.50" width="47.80" height="48.00" fill="#ededed"/><rect x="49.30" y="393.50" width="47.80" height="48.00" fill="#ededed"/><rect x="98.10" y="393.50" width="47.80" height="48.00" fill="#ededed"/><rect x="146.90" y="393.50" width="47.80" height="48.00" fill="#ededed"/><rect x="195.70" y="393.50" width="47.80" height="48.00" fill="#ededed"/><path d="M1 442.00 H243" stroke="#e0e0e0" stroke-width="1"/><path d="M48.80 393.00 V442.00" stroke="#e0e0e0" stroke-width="1"/><path d="M97.60 393.00 V442.00" stroke="#e0e0e0" stroke-width="1"/><path d="M146.40 393.00 V442.00" stroke="#e0e0e0" stroke-width="1"/><path d="M195.20 393.00 V442.00" stroke="#e0e0e0" stroke-width="1"/><rect x="0.50" y="442.50" width="47.80" height="48.00" fill="#ededed"/><rect x="49.30" y="442.50" width="47.80" height="48.00" fill="#ededed"/><rect x="98.10" y="442.50" width="47.80" height="48.00" fill="#ededed"/><rect x="146.90" y="442.50" width="47.80" height="48.00" fill="#ededed"/><rect x="195.70" y="442.50" width="47.80" height="48.00" fill="#ededed"/><path d="M1 491.00 H243" stroke="#e0e0e0" stroke-width="1"/><path d="M48.80 442.00 V491.00" stroke="#e0e0e0" stroke-width="1"/><path d="M97.60 442.00 V491.00" stroke="#e0e0e0" stroke-width="1"/><path d="M146.40 442.00 V491.00" stroke="#e0e0e0" stroke-width="1"/><path d="M195.20 442.00 V491.00" stroke="#e0e0e0" stroke-width="1"/><path d="M1 197.00 H243" stroke="#e0e0e0" stroke-width="1"/><rect x="9.0" y="24.5" width="30" height="30" fill="#fff" stroke="#7a8ea8" stroke-width="1"/><circle cx="73.0" cy="40.0" r="14.8" fill="#fff" stroke="#8c8c8c"/><path d="M111.0 25.0 H133.0 Q135.5 25.0 135.5 28.0 Q138.5 40.0 135.5 52.0 Q135.5 55.0 133.0 55.0 H111.0 Q108.5 55.0 108.5 52.0 Q105.5 40.0 108.5 28.0 Q108.5 25.0 111.0 25.0Z" fill="#fff" stroke="#8c8c8c" stroke-width="1" stroke-linejoin="round" /><path d="M171.0 25.0 L186.0 40.0 L171.0 55.0 L156.0 40.0Z" fill="#fff" stroke="#8c8c8c" stroke-width="1" stroke-linejoin="round" /><path d="M219.5 25.0 L233.5 35.5 L228.0 52.5 L211.0 52.5 L205.5 35.5Z" fill="#fff" stroke="#8c8c8c" stroke-width="1" stroke-linejoin="round" /><path d="M17.0 74.5 H32.0 L39.5 89.5 L32.0 104.5 H17.0 L9.5 89.5Z" fill="#fff" stroke="#8c8c8c" stroke-width="1" stroke-linejoin="round" /><path d="M66.5 74.5 H79.5 L88.0 83.0 V96.0 L79.5 104.5 H66.5 L58.0 96.0 V83.0Z" fill="#fff" stroke="#8c8c8c" stroke-width="1" stroke-linejoin="round" /><path d="M107.0 74.5 L137.0 89.5 L107.0 104.5Z" fill="#fff" stroke="#8c8c8c" stroke-width="1" stroke-linejoin="round" /><path d="M156.0 74.5 H186.0 L171.0 104.5Z" fill="#fff" stroke="#8c8c8c" stroke-width="1" stroke-linejoin="round" /><path d="M204.5 74.5 L234.5 104.5 H204.5Z" fill="#fff" stroke="#8c8c8c" stroke-width="1" stroke-linejoin="round" /><path d="M9.5 148.0 H25.5 V140.0 L39.5 155.0 L25.5 170.0 V162.0 H9.5Z" fill="#fff" stroke="#8c8c8c" stroke-width="1" stroke-linejoin="round" /><path d="M58.0 155.0 L66.0 140.0 V148.0 H80.0 V140.0 L88.0 155.0 L80.0 170.0 V162.0 H66.0 V170.0Z" fill="#fff" stroke="#8c8c8c" stroke-width="1" stroke-linejoin="round" /><path d="M113.0 142.0 Q122.0 138.0 131.0 142.0 L122.0 154.0Z" fill="#fff" stroke="#d0d0d0" stroke-width="1" stroke-linejoin="round" /><path d="M162.0 142.0 Q171.0 138.0 180.0 142.0 L171.0 156.0Z" fill="#fff" stroke="#8c8c8c" stroke-width="1" stroke-linejoin="round" /><path d="M219.50 141.50 L223.14 151.48 L233.77 151.86 L225.40 158.42 L228.32 168.64 L219.50 162.70 L210.68 168.64 L213.60 158.42 L205.23 151.86 L215.86 151.48Z" fill="#fff" stroke="#8c8c8c" stroke-width="1" stroke-linejoin="round" /><path d="M24.5 207.0 L39.5 215.0 V237.0 H9.5 V215.0Z" fill="#fff" stroke="#8c8c8c" stroke-width="1" stroke-linejoin="round" /><path d="M58.0 207.0 H88.0 V237.0 H58.0Z" fill="#fff" stroke="#8c8c8c" stroke-width="1" stroke-linejoin="round" /><path d="M61.0 207.0 V237.0 M85.0 207.0 V237.0" fill="none" stroke="#8c8c8c" stroke-width="1" stroke-linejoin="round" /><rect x="107.0" y="207.0" width="30" height="30" fill="#fff"/><path d="M107.0 207.0 H137.0 M107.0 237.0 H137.0" fill="none" stroke="#8c8c8c" stroke-width="1.3" stroke-linejoin="round" /><rect x="156.0" y="207.0" width="30" height="30" fill="#fff"/><path d="M156.0 207.0 V237.0 M186.0 207.0 V237.0" fill="none" stroke="#8c8c8c" stroke-width="1.3" stroke-linejoin="round" /><path d="M210.5 207.0 H234.5 L228.5 237.0 H204.5Z" fill="#fff" stroke="#8c8c8c" stroke-width="1" stroke-linejoin="round" /><path d="M9.5 256.0 H39.5 L33.5 286.0 H15.5Z" fill="#fff" stroke="#8c8c8c" stroke-width="1" stroke-linejoin="round" /><path d="M58.0 262.0 L88.0 256.0 V286.0 H58.0Z" fill="#fff" stroke="#8c8c8c" stroke-width="1" stroke-linejoin="round" /><path d="M107.0 260.0 Q107.0 255.0 122.0 255.0 Q137.0 255.0 137.0 260.0 V283.0 Q137.0 287.0 122.0 287.0 Q107.0 287.0 107.0 283.0Z" fill="#fff" stroke="#8c8c8c" stroke-width="1" stroke-linejoin="round" /><path d="M107.0 260.0 Q107.0 264.0 122.0 264.0 Q137.0 264.0 137.0 260.0" fill="none" stroke="#8c8c8c" stroke-width="1" stroke-linejoin="round" /><path d="M156.0 271.0 L162.0 256.0 H180.0 Q188.0 271.0 180.0 286.0 H162.0Z" fill="#fff" stroke="#8c8c8c" stroke-width="1" stroke-linejoin="round" /><path d="M204.5 256.0 H234.5 V280.0 Q225.5 276.0 219.5 282.0 Q210.5 286.0 204.5 284.0Z" fill="#fff" stroke="#8c8c8c" stroke-width="1" stroke-linejoin="round" /><path d="M9.5 305.0 H32.5 L39.5 312.0 V335.0 H9.5Z" fill="#fff" stroke="#8c8c8c" stroke-width="1" stroke-linejoin="round" /><path d="M32.5 305.0 Q33.5 311.0 39.5 312.0" fill="#eee" stroke="#8c8c8c" stroke-width="1" stroke-linejoin="round" /><rect x="58.0" y="305.0" width="30" height="30" rx="7" fill="#fff" stroke="#8c8c8c"/><path d="M133.75 323.63 A4.42 4.42 0 0 1 128.67 330.34 A4.42 4.42 0 0 1 120.46 332.20 A4.42 4.42 0 0 1 112.98 328.36 A4.42 4.42 0 0 1 109.71 320.60 A4.42 4.42 0 0 1 112.20 312.57 A4.42 4.42 0 0 1 119.27 308.01 A4.42 4.42 0 0 1 127.62 309.06 A4.42 4.42 0 0 1 133.34 315.23 A4.42 4.42 0 0 1 133.75 323.63Z" fill="#fff" stroke="#8c8c8c" stroke-width="0.9" stroke-linejoin="round" /><path d="M166.0 305.0 H176.0 V315.0 H186.0 V325.0 H176.0 V335.0 H166.0 V325.0 H156.0 V315.0 H166.0Z" fill="#fff" stroke="#8c8c8c" stroke-width="1" stroke-linejoin="round" /><path d="M204.5 335.0 Q204.5 305.0 219.5 305.0 Q234.5 305.0 234.5 335.0Z" fill="#fff" stroke="#8c8c8c" stroke-width="1" stroke-linejoin="round" /><path d="M9.5 356.0 L11.5 354.0 H39.5 V382.0 L37.5 384.0 H9.5Z" fill="#fff" stroke="#8c8c8c" stroke-width="1" stroke-linejoin="round" /><path d="M9.5 356.0 H37.5 V384.0 M37.5 356.0 L39.5 354.0" fill="none" stroke="#8c8c8c" stroke-width="0.8" stroke-linejoin="round" /><rect x="58.0" y="354.0" width="30" height="30" fill="#fff" stroke="#8c8c8c"/><rect x="107.0" y="354.0" width="30" height="30" fill="#fff" stroke="#a0a0a0"/><path d="M158.0 384.0 H186.0 V356.0" fill="none" stroke="#999" stroke-width="2" stroke-linejoin="round" /><rect x="156.0" y="354.0" width="29" height="29" fill="#fff" stroke="#8c8c8c"/><path d="M209.5 354.0 H229.5 L234.5 359.0 V379.0 L229.5 384.0 H209.5 L204.5 379.0 V359.0Z" fill="#fff" stroke="#8c8c8c" stroke-width="1" stroke-linejoin="round" /><path d="M9.5 402.5 H24.5 Q39.5 402.5 39.5 417.5 Q39.5 432.5 24.5 432.5 H9.5Z" fill="#fff" stroke="#8c8c8c" stroke-width="1" stroke-linejoin="round" /><path d="M58.0 402.5 Q78.0 402.5 88.0 417.5 Q78.0 432.5 58.0 432.5 Q64.0 417.5 58.0 402.5Z" fill="#fff" stroke="#8c8c8c" stroke-width="1" stroke-linejoin="round" /><path d="M122.0 431.0 C116.0 424.5 107.0 418.5 107.0 411.5 C107.0 406.5 110.5 404.5 114.0 404.5 C118.0 404.5 121.0 407.5 122.0 410.0 C123.0 407.5 126.0 404.5 130.0 404.5 C133.5 404.5 137.0 406.5 137.0 411.5 C137.0 418.5 128.0 424.5 122.0 431.0Z" fill="#fff" stroke="#8c8c8c" stroke-width="1" stroke-linejoin="round" /><path d="M186.00 417.50 L184.25 418.66 L185.77 420.10 L183.85 420.94 L185.10 422.63 L183.05 423.12 L183.99 425.00 L181.89 425.13 L182.49 427.14 L180.40 426.90 L180.64 428.99 L178.63 428.39 L178.50 430.49 L176.62 429.55 L176.13 431.60 L174.44 430.35 L173.60 432.27 L172.16 430.75 L171.00 432.50 L169.84 430.75 L168.40 432.27 L167.56 430.35 L165.87 431.60 L165.38 429.55 L163.50 430.49 L163.37 428.39 L161.36 428.99 L161.60 426.90 L159.51 427.14 L160.11 425.13 L158.01 425.00 L158.95 423.12 L156.90 422.63 L158.15 420.94 L156.23 420.10 L157.75 418.66 L156.00 417.50 L157.75 416.34 L156.23 414.90 L158.15 414.06 L156.90 412.37 L158.95 411.88 L158.01 410.00 L160.11 409.87 L159.51 407.86 L161.60 408.10 L161.36 406.01 L163.37 406.61 L163.50 404.51 L165.38 405.45 L165.87 403.40 L167.56 404.65 L168.40 402.73 L169.84 404.25 L171.00 402.50 L172.16 404.25 L173.60 402.73 L174.44 404.65 L176.13 403.40 L176.62 405.45 L178.50 404.51 L178.63 406.61 L180.64 406.01 L180.40 408.10 L182.49 407.86 L181.89 409.87 L183.99 410.00 L183.05 411.88 L185.10 412.37 L183.85 414.06 L185.77 414.90 L184.25 416.34Z" fill="#fff" stroke="#8c8c8c" stroke-width="0.8" stroke-linejoin="round" /><path d="M215.5 426.5 Q204.5 426.5 204.5 415.5 Q204.5 402.5 219.5 402.5 Q234.5 402.5 234.5 415.5 Q234.5 426.5 220.5 426.5 L214.5 432.5Z" fill="#fff" stroke="#8c8c8c" stroke-width="1" stroke-linejoin="round" /><path d="M36.76 462.49 A2.86 2.86 0 0 1 33.11 466.53 A3.68 3.68 0 0 1 26.37 468.45 A3.85 3.85 0 0 1 19.10 467.53 A3.19 3.19 0 0 1 14.08 464.12 A2.46 2.46 0 0 1 13.24 459.51 A2.86 2.86 0 0 1 16.89 455.47 A3.68 3.68 0 0 1 23.63 453.55 A3.85 3.85 0 0 1 30.90 454.47 A3.19 3.19 0 0 1 35.92 457.88 A2.46 2.46 0 0 1 36.76 462.49Z" fill="#fff" stroke="#8c8c8c" stroke-width="0.9" stroke-linejoin="round" /><ellipse cx="20.0" cy="473.0" rx="3.2" ry="2.1" fill="#fff" stroke="#8c8c8c" stroke-width="0.9"/><circle cx="13.5" cy="477.0" r="1.5" fill="#fff" stroke="#8c8c8c" stroke-width="0.9"/><path d="M58.0 466.0 L70.5 480.5 L71.5 471.5 L79.5 478.0 L79.0 462.0 L87.5 464.5 L77.0 451.0 L77.0 460.0 L67.5 456.0 L69.5 467.0Z" fill="#fff" stroke="#8c8c8c" stroke-width="0.9" stroke-linejoin="round" /><path d="M110.6 453.9 H133.4 Q133.0 470.5 136.5 477.3 H107.5 Q111.0 470.5 110.6 453.9Z" fill="#fff" stroke="#8c8c8c" stroke-width="1.1" stroke-linejoin="round" /><path d="M160.0 454.5 H168.0 Q167.0 449.5 172.0 449.5 Q177.0 449.5 176.0 454.5 H180.0 V460.5 Q185.0 459.5 185.0 463.5 Q185.0 467.5 180.0 466.5 V474.5 H174.0 Q176.0 480.5 171.0 480.5 Q166.0 480.5 168.0 474.5 H160.0 V467.5 Q156.0 468.5 156.0 464.0 Q156.0 459.5 160.0 460.5Z" fill="#fff" stroke="#8c8c8c" stroke-width="0.9" stroke-linejoin="round" /><circle cx="219.5" cy="466.5" r="14" fill="#fff" stroke="#8c8c8c" stroke-width="1.2"/><circle cx="219.5" cy="466.5" r="11" fill="#fff" stroke="#8c8c8c" stroke-width="1"/><path d="M211.0 460.0 L226.0 475.0 L228.0 473.0 L213.0 458.0Z" fill="#fff" stroke="#8c8c8c" stroke-width="1" stroke-linejoin="round" /></svg>
<svg style="position:absolute;left:1058px;top:309px;" width="14" height="26" viewBox="0 0 14 26"><path d="M0 0 Q2 0 3 2 L9.5 11.5 Q10.5 13 9.5 14.5 L3 24 Q2 26 0 26Z" fill="#eeeeee" stroke="#cfcfcf" stroke-width="1"/><rect x="0" y="1" width="2.5" height="24" fill="#eeeeee"/></svg>
</body></html>
